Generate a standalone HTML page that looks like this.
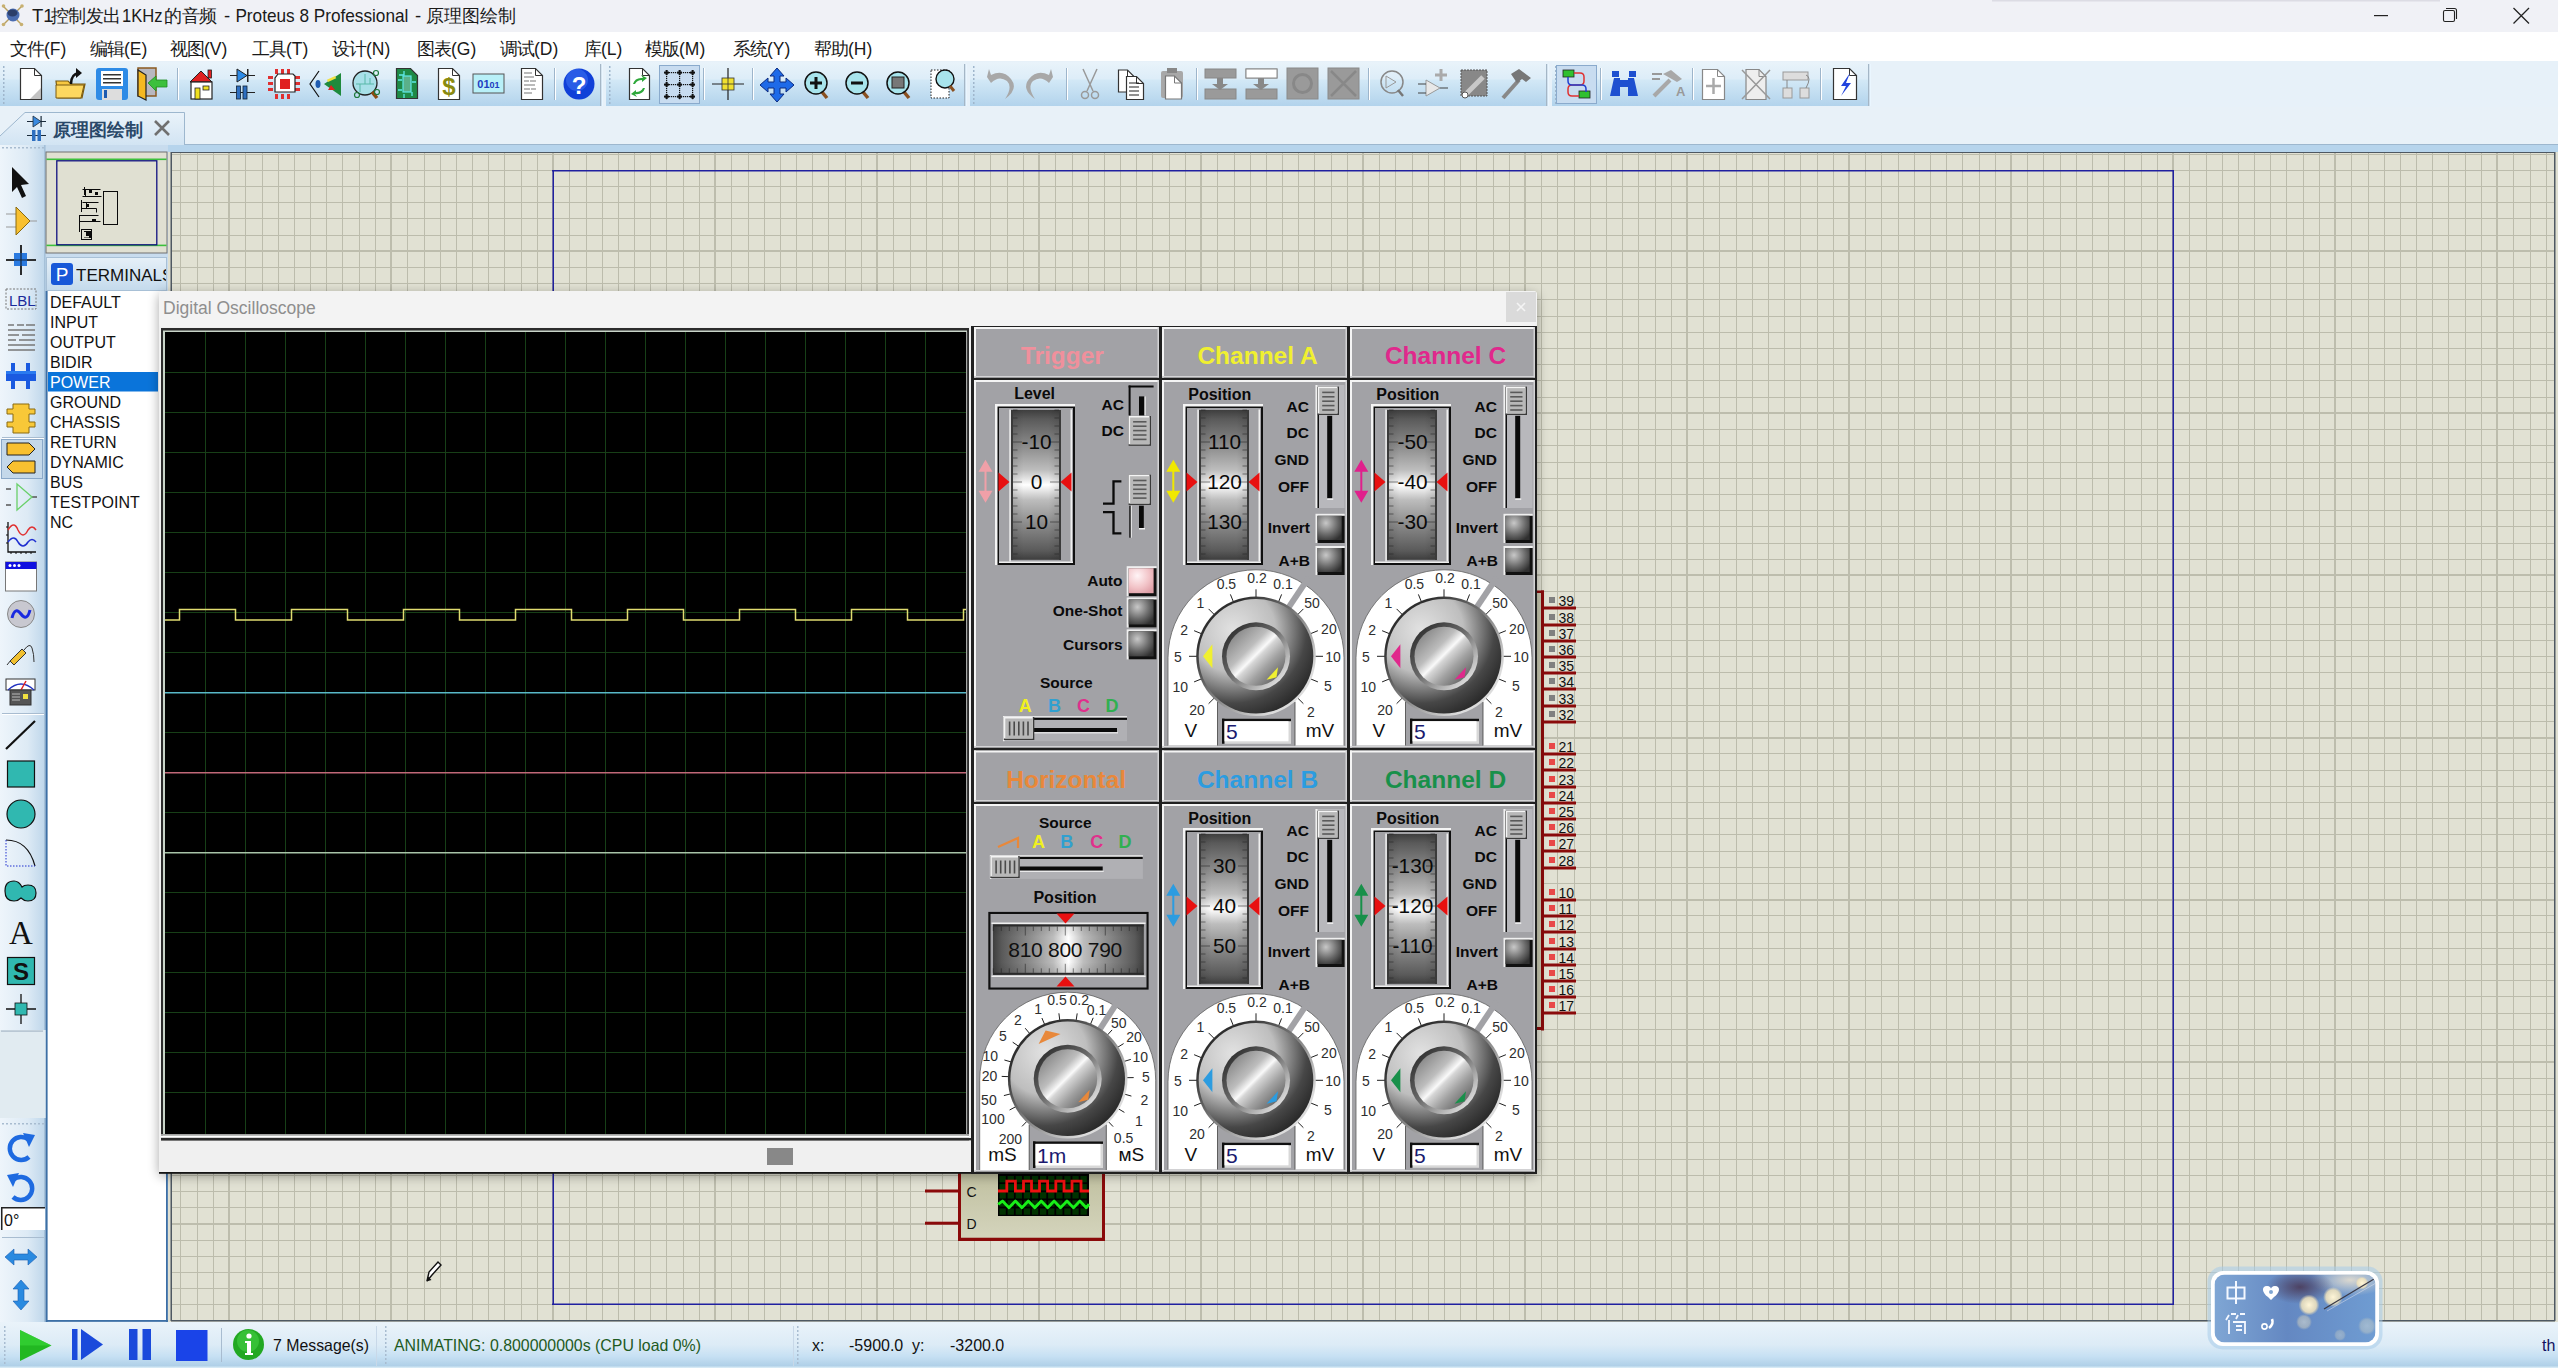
<!DOCTYPE html>
<html><head><meta charset="utf-8"><title>Proteus</title>
<style>html,body{margin:0;padding:0;overflow:hidden;background:#E0E0D2} svg{display:block} text{font-family:"Liberation Sans",sans-serif}</style></head>
<body><svg width="2558" height="1368" viewBox="0 0 2558 1368" shape-rendering="auto"><defs>
<linearGradient id="gTool" x1="0" y1="0" x2="0" y2="1"><stop offset="0" stop-color="#E9F3FA"/><stop offset="0.38" stop-color="#DDEDF8"/><stop offset="0.42" stop-color="#D2E8F6"/><stop offset="1" stop-color="#B2D3EC"/></linearGradient>
<linearGradient id="gStatus" x1="0" y1="0" x2="0" y2="1"><stop offset="0" stop-color="#EAF3FA"/><stop offset="0.5" stop-color="#DCEBF6"/><stop offset="0.75" stop-color="#C6E0F3"/><stop offset="0.95" stop-color="#B0D0E8"/><stop offset="1" stop-color="#E0F0F8"/></linearGradient>
<linearGradient id="gLeft" x1="0" y1="0" x2="1" y2="0"><stop offset="0" stop-color="#EEF5FB"/><stop offset="0.6" stop-color="#DDEAF5"/><stop offset="1" stop-color="#BCD5EA"/></linearGradient>
<linearGradient id="gTab" x1="0" y1="0" x2="0" y2="1"><stop offset="0" stop-color="#EAF3FA"/><stop offset="1" stop-color="#D2E4F3"/></linearGradient>
<linearGradient id="gHdr" x1="0" y1="0" x2="0" y2="1"><stop offset="0" stop-color="#E6F0F8"/><stop offset="1" stop-color="#C4DAEC"/></linearGradient>
<linearGradient id="gDrumV" x1="0" y1="0" x2="0" y2="1"><stop offset="0" stop-color="#3E3E3E"/><stop offset="0.06" stop-color="#5A5A5A"/><stop offset="0.25" stop-color="#8E8E8E"/><stop offset="0.4" stop-color="#BDBDBD"/><stop offset="0.5" stop-color="#FFFFFF"/><stop offset="0.6" stop-color="#BDBDBD"/><stop offset="0.75" stop-color="#8E8E8E"/><stop offset="0.94" stop-color="#5A5A5A"/><stop offset="1" stop-color="#3E3E3E"/></linearGradient>
<linearGradient id="gDrumH" x1="0" y1="0" x2="1" y2="0"><stop offset="0" stop-color="#3E3E3E"/><stop offset="0.06" stop-color="#5A5A5A"/><stop offset="0.25" stop-color="#8E8E8E"/><stop offset="0.4" stop-color="#BDBDBD"/><stop offset="0.5" stop-color="#FFFFFF"/><stop offset="0.6" stop-color="#BDBDBD"/><stop offset="0.75" stop-color="#8E8E8E"/><stop offset="0.94" stop-color="#5A5A5A"/><stop offset="1" stop-color="#3E3E3E"/></linearGradient>
<linearGradient id="gDrumSide" x1="0" y1="0" x2="1" y2="0"><stop offset="0" stop-color="#000" stop-opacity="0.12"/><stop offset="0.25" stop-color="#000" stop-opacity="0"/><stop offset="0.75" stop-color="#000" stop-opacity="0"/><stop offset="1" stop-color="#000" stop-opacity="0.12"/></linearGradient>
<linearGradient id="gDrumSideH" x1="0" y1="0" x2="0" y2="1"><stop offset="0" stop-color="#000" stop-opacity="0.12"/><stop offset="0.25" stop-color="#000" stop-opacity="0"/><stop offset="0.75" stop-color="#000" stop-opacity="0"/><stop offset="1" stop-color="#000" stop-opacity="0.12"/></linearGradient>
<radialGradient id="gBtn" cx="0.35" cy="0.3" r="0.8"><stop offset="0" stop-color="#C8C8C8"/><stop offset="0.6" stop-color="#6A6A6A"/><stop offset="1" stop-color="#303030"/></radialGradient>
<radialGradient id="gBtnP" cx="0.35" cy="0.3" r="0.8"><stop offset="0" stop-color="#FFF4F6"/><stop offset="0.6" stop-color="#F2C4C8"/><stop offset="1" stop-color="#E0A0A8"/></radialGradient>
<radialGradient id="gKnob" cx="0.3" cy="0.27" r="0.82"><stop offset="0" stop-color="#E2E2E2"/><stop offset="0.45" stop-color="#BEBEBE"/><stop offset="0.78" stop-color="#474747"/><stop offset="1" stop-color="#262626"/></radialGradient><linearGradient id="gRim" x1="0.2" y1="0.2" x2="0.8" y2="0.8"><stop offset="0" stop-color="#2E2E2E"/><stop offset="0.5" stop-color="#808080"/><stop offset="1" stop-color="#DCDCDC"/></linearGradient>
<linearGradient id="gRing" x1="0.15" y1="0.15" x2="0.85" y2="0.85"><stop offset="0" stop-color="#363636"/><stop offset="0.45" stop-color="#6A6A6A"/><stop offset="1" stop-color="#DADADA"/></linearGradient>
<linearGradient id="gInner" x1="0.15" y1="0.15" x2="0.85" y2="0.85"><stop offset="0" stop-color="#8E8E8E"/><stop offset="0.32" stop-color="#BDBDBD"/><stop offset="0.48" stop-color="#FAFAFA"/><stop offset="0.54" stop-color="#D6D6D6"/><stop offset="0.75" stop-color="#A0A0A0"/><stop offset="1" stop-color="#6E6E6E"/></linearGradient>
<linearGradient id="gInnerX" x1="0" y1="0" x2="1" y2="1"><stop offset="0" stop-color="#505050"/><stop offset="0.45" stop-color="#B0B0B0"/><stop offset="0.5" stop-color="#F0F0F0"/><stop offset="0.55" stop-color="#B8B8B8"/><stop offset="1" stop-color="#3A3A3A"/></linearGradient>
<filter id="shadow" x="-5%" y="-5%" width="110%" height="110%"><feGaussianBlur in="SourceAlpha" stdDeviation="6"/><feOffset dx="0" dy="3"/><feComponentTransfer><feFuncA type="linear" slope="0.35"/></feComponentTransfer><feMerge><feMergeNode/><feMergeNode in="SourceGraphic"/></feMerge></filter>
</defs><rect x="0" y="0" width="2558" height="1368" fill="#E0E0D2" /><rect x="171" y="152" width="2384" height="1169" fill="#E1E1D3" /><rect x="180" y="152" width="1" height="1169" fill="#BCBCAC"/><rect x="197" y="152" width="1" height="1169" fill="#BCBCAC"/><rect x="213" y="152" width="1" height="1169" fill="#BCBCAC"/><rect x="228" y="152" width="2" height="1169" fill="#BDBDAD"/><rect x="245" y="152" width="1" height="1169" fill="#BCBCAC"/><rect x="262" y="152" width="1" height="1169" fill="#BCBCAC"/><rect x="278" y="152" width="1" height="1169" fill="#BCBCAC"/><rect x="294" y="152" width="1" height="1169" fill="#BCBCAC"/><rect x="310" y="152" width="1" height="1169" fill="#BCBCAC"/><rect x="326" y="152" width="1" height="1169" fill="#BCBCAC"/><rect x="342" y="152" width="1" height="1169" fill="#BCBCAC"/><rect x="359" y="152" width="1" height="1169" fill="#BCBCAC"/><rect x="375" y="152" width="1" height="1169" fill="#BCBCAC"/><rect x="390" y="152" width="2" height="1169" fill="#BDBDAD"/><rect x="407" y="152" width="1" height="1169" fill="#BCBCAC"/><rect x="424" y="152" width="1" height="1169" fill="#BCBCAC"/><rect x="440" y="152" width="1" height="1169" fill="#BCBCAC"/><rect x="456" y="152" width="1" height="1169" fill="#BCBCAC"/><rect x="472" y="152" width="1" height="1169" fill="#BCBCAC"/><rect x="488" y="152" width="1" height="1169" fill="#BCBCAC"/><rect x="504" y="152" width="1" height="1169" fill="#BCBCAC"/><rect x="521" y="152" width="1" height="1169" fill="#BCBCAC"/><rect x="537" y="152" width="1" height="1169" fill="#BCBCAC"/><rect x="552" y="152" width="2" height="1169" fill="#BDBDAD"/><rect x="569" y="152" width="1" height="1169" fill="#BCBCAC"/><rect x="586" y="152" width="1" height="1169" fill="#BCBCAC"/><rect x="602" y="152" width="1" height="1169" fill="#BCBCAC"/><rect x="618" y="152" width="1" height="1169" fill="#BCBCAC"/><rect x="634" y="152" width="1" height="1169" fill="#BCBCAC"/><rect x="650" y="152" width="1" height="1169" fill="#BCBCAC"/><rect x="666" y="152" width="1" height="1169" fill="#BCBCAC"/><rect x="683" y="152" width="1" height="1169" fill="#BCBCAC"/><rect x="699" y="152" width="1" height="1169" fill="#BCBCAC"/><rect x="714" y="152" width="2" height="1169" fill="#BDBDAD"/><rect x="731" y="152" width="1" height="1169" fill="#BCBCAC"/><rect x="748" y="152" width="1" height="1169" fill="#BCBCAC"/><rect x="764" y="152" width="1" height="1169" fill="#BCBCAC"/><rect x="780" y="152" width="1" height="1169" fill="#BCBCAC"/><rect x="796" y="152" width="1" height="1169" fill="#BCBCAC"/><rect x="812" y="152" width="1" height="1169" fill="#BCBCAC"/><rect x="828" y="152" width="1" height="1169" fill="#BCBCAC"/><rect x="845" y="152" width="1" height="1169" fill="#BCBCAC"/><rect x="861" y="152" width="1" height="1169" fill="#BCBCAC"/><rect x="876" y="152" width="2" height="1169" fill="#BDBDAD"/><rect x="893" y="152" width="1" height="1169" fill="#BCBCAC"/><rect x="910" y="152" width="1" height="1169" fill="#BCBCAC"/><rect x="926" y="152" width="1" height="1169" fill="#BCBCAC"/><rect x="942" y="152" width="1" height="1169" fill="#BCBCAC"/><rect x="958" y="152" width="1" height="1169" fill="#BCBCAC"/><rect x="974" y="152" width="1" height="1169" fill="#BCBCAC"/><rect x="990" y="152" width="1" height="1169" fill="#BCBCAC"/><rect x="1007" y="152" width="1" height="1169" fill="#BCBCAC"/><rect x="1023" y="152" width="1" height="1169" fill="#BCBCAC"/><rect x="1038" y="152" width="2" height="1169" fill="#BDBDAD"/><rect x="1055" y="152" width="1" height="1169" fill="#BCBCAC"/><rect x="1072" y="152" width="1" height="1169" fill="#BCBCAC"/><rect x="1088" y="152" width="1" height="1169" fill="#BCBCAC"/><rect x="1104" y="152" width="1" height="1169" fill="#BCBCAC"/><rect x="1120" y="152" width="1" height="1169" fill="#BCBCAC"/><rect x="1136" y="152" width="1" height="1169" fill="#BCBCAC"/><rect x="1152" y="152" width="1" height="1169" fill="#BCBCAC"/><rect x="1169" y="152" width="1" height="1169" fill="#BCBCAC"/><rect x="1185" y="152" width="1" height="1169" fill="#BCBCAC"/><rect x="1200" y="152" width="2" height="1169" fill="#BDBDAD"/><rect x="1217" y="152" width="1" height="1169" fill="#BCBCAC"/><rect x="1234" y="152" width="1" height="1169" fill="#BCBCAC"/><rect x="1250" y="152" width="1" height="1169" fill="#BCBCAC"/><rect x="1266" y="152" width="1" height="1169" fill="#BCBCAC"/><rect x="1282" y="152" width="1" height="1169" fill="#BCBCAC"/><rect x="1298" y="152" width="1" height="1169" fill="#BCBCAC"/><rect x="1314" y="152" width="1" height="1169" fill="#BCBCAC"/><rect x="1331" y="152" width="1" height="1169" fill="#BCBCAC"/><rect x="1347" y="152" width="1" height="1169" fill="#BCBCAC"/><rect x="1362" y="152" width="2" height="1169" fill="#BDBDAD"/><rect x="1379" y="152" width="1" height="1169" fill="#BCBCAC"/><rect x="1395" y="152" width="1" height="1169" fill="#BCBCAC"/><rect x="1412" y="152" width="1" height="1169" fill="#BCBCAC"/><rect x="1428" y="152" width="1" height="1169" fill="#BCBCAC"/><rect x="1444" y="152" width="1" height="1169" fill="#BCBCAC"/><rect x="1460" y="152" width="1" height="1169" fill="#BCBCAC"/><rect x="1476" y="152" width="1" height="1169" fill="#BCBCAC"/><rect x="1493" y="152" width="1" height="1169" fill="#BCBCAC"/><rect x="1509" y="152" width="1" height="1169" fill="#BCBCAC"/><rect x="1524" y="152" width="2" height="1169" fill="#BDBDAD"/><rect x="1541" y="152" width="1" height="1169" fill="#BCBCAC"/><rect x="1557" y="152" width="1" height="1169" fill="#BCBCAC"/><rect x="1574" y="152" width="1" height="1169" fill="#BCBCAC"/><rect x="1590" y="152" width="1" height="1169" fill="#BCBCAC"/><rect x="1606" y="152" width="1" height="1169" fill="#BCBCAC"/><rect x="1622" y="152" width="1" height="1169" fill="#BCBCAC"/><rect x="1638" y="152" width="1" height="1169" fill="#BCBCAC"/><rect x="1655" y="152" width="1" height="1169" fill="#BCBCAC"/><rect x="1671" y="152" width="1" height="1169" fill="#BCBCAC"/><rect x="1686" y="152" width="2" height="1169" fill="#BDBDAD"/><rect x="1703" y="152" width="1" height="1169" fill="#BCBCAC"/><rect x="1719" y="152" width="1" height="1169" fill="#BCBCAC"/><rect x="1736" y="152" width="1" height="1169" fill="#BCBCAC"/><rect x="1752" y="152" width="1" height="1169" fill="#BCBCAC"/><rect x="1768" y="152" width="1" height="1169" fill="#BCBCAC"/><rect x="1784" y="152" width="1" height="1169" fill="#BCBCAC"/><rect x="1800" y="152" width="1" height="1169" fill="#BCBCAC"/><rect x="1817" y="152" width="1" height="1169" fill="#BCBCAC"/><rect x="1833" y="152" width="1" height="1169" fill="#BCBCAC"/><rect x="1848" y="152" width="2" height="1169" fill="#BDBDAD"/><rect x="1865" y="152" width="1" height="1169" fill="#BCBCAC"/><rect x="1881" y="152" width="1" height="1169" fill="#BCBCAC"/><rect x="1898" y="152" width="1" height="1169" fill="#BCBCAC"/><rect x="1914" y="152" width="1" height="1169" fill="#BCBCAC"/><rect x="1930" y="152" width="1" height="1169" fill="#BCBCAC"/><rect x="1946" y="152" width="1" height="1169" fill="#BCBCAC"/><rect x="1962" y="152" width="1" height="1169" fill="#BCBCAC"/><rect x="1979" y="152" width="1" height="1169" fill="#BCBCAC"/><rect x="1995" y="152" width="1" height="1169" fill="#BCBCAC"/><rect x="2010" y="152" width="2" height="1169" fill="#BDBDAD"/><rect x="2027" y="152" width="1" height="1169" fill="#BCBCAC"/><rect x="2043" y="152" width="1" height="1169" fill="#BCBCAC"/><rect x="2060" y="152" width="1" height="1169" fill="#BCBCAC"/><rect x="2076" y="152" width="1" height="1169" fill="#BCBCAC"/><rect x="2092" y="152" width="1" height="1169" fill="#BCBCAC"/><rect x="2108" y="152" width="1" height="1169" fill="#BCBCAC"/><rect x="2124" y="152" width="1" height="1169" fill="#BCBCAC"/><rect x="2141" y="152" width="1" height="1169" fill="#BCBCAC"/><rect x="2157" y="152" width="1" height="1169" fill="#BCBCAC"/><rect x="2172" y="152" width="2" height="1169" fill="#BDBDAD"/><rect x="2189" y="152" width="1" height="1169" fill="#BCBCAC"/><rect x="2206" y="152" width="1" height="1169" fill="#BCBCAC"/><rect x="2222" y="152" width="1" height="1169" fill="#BCBCAC"/><rect x="2238" y="152" width="1" height="1169" fill="#BCBCAC"/><rect x="2254" y="152" width="1" height="1169" fill="#BCBCAC"/><rect x="2270" y="152" width="1" height="1169" fill="#BCBCAC"/><rect x="2286" y="152" width="1" height="1169" fill="#BCBCAC"/><rect x="2303" y="152" width="1" height="1169" fill="#BCBCAC"/><rect x="2319" y="152" width="1" height="1169" fill="#BCBCAC"/><rect x="2334" y="152" width="2" height="1169" fill="#BDBDAD"/><rect x="2351" y="152" width="1" height="1169" fill="#BCBCAC"/><rect x="2368" y="152" width="1" height="1169" fill="#BCBCAC"/><rect x="2384" y="152" width="1" height="1169" fill="#BCBCAC"/><rect x="2400" y="152" width="1" height="1169" fill="#BCBCAC"/><rect x="2416" y="152" width="1" height="1169" fill="#BCBCAC"/><rect x="2432" y="152" width="1" height="1169" fill="#BCBCAC"/><rect x="2448" y="152" width="1" height="1169" fill="#BCBCAC"/><rect x="2465" y="152" width="1" height="1169" fill="#BCBCAC"/><rect x="2481" y="152" width="1" height="1169" fill="#BCBCAC"/><rect x="2496" y="152" width="2" height="1169" fill="#BDBDAD"/><rect x="2513" y="152" width="1" height="1169" fill="#BCBCAC"/><rect x="2530" y="152" width="1" height="1169" fill="#BCBCAC"/><rect x="2546" y="152" width="1" height="1169" fill="#BCBCAC"/><rect x="171" y="154" width="2384" height="1" fill="#BCBCAC"/><rect x="171" y="170" width="2384" height="1" fill="#BCBCAC"/><rect x="171" y="186" width="2384" height="1" fill="#BCBCAC"/><rect x="171" y="202" width="2384" height="1" fill="#BCBCAC"/><rect x="171" y="218" width="2384" height="1" fill="#BCBCAC"/><rect x="171" y="235" width="2384" height="1" fill="#BCBCAC"/><rect x="171" y="250" width="2384" height="2" fill="#BDBDAD"/><rect x="171" y="267" width="2384" height="1" fill="#BCBCAC"/><rect x="171" y="283" width="2384" height="1" fill="#BCBCAC"/><rect x="171" y="299" width="2384" height="1" fill="#BCBCAC"/><rect x="171" y="316" width="2384" height="1" fill="#BCBCAC"/><rect x="171" y="332" width="2384" height="1" fill="#BCBCAC"/><rect x="171" y="348" width="2384" height="1" fill="#BCBCAC"/><rect x="171" y="364" width="2384" height="1" fill="#BCBCAC"/><rect x="171" y="380" width="2384" height="1" fill="#BCBCAC"/><rect x="171" y="397" width="2384" height="1" fill="#BCBCAC"/><rect x="171" y="412" width="2384" height="2" fill="#BDBDAD"/><rect x="171" y="429" width="2384" height="1" fill="#BCBCAC"/><rect x="171" y="445" width="2384" height="1" fill="#BCBCAC"/><rect x="171" y="462" width="2384" height="1" fill="#BCBCAC"/><rect x="171" y="478" width="2384" height="1" fill="#BCBCAC"/><rect x="171" y="494" width="2384" height="1" fill="#BCBCAC"/><rect x="171" y="510" width="2384" height="1" fill="#BCBCAC"/><rect x="171" y="526" width="2384" height="1" fill="#BCBCAC"/><rect x="171" y="543" width="2384" height="1" fill="#BCBCAC"/><rect x="171" y="559" width="2384" height="1" fill="#BCBCAC"/><rect x="171" y="574" width="2384" height="2" fill="#BDBDAD"/><rect x="171" y="591" width="2384" height="1" fill="#BCBCAC"/><rect x="171" y="607" width="2384" height="1" fill="#BCBCAC"/><rect x="171" y="624" width="2384" height="1" fill="#BCBCAC"/><rect x="171" y="640" width="2384" height="1" fill="#BCBCAC"/><rect x="171" y="656" width="2384" height="1" fill="#BCBCAC"/><rect x="171" y="672" width="2384" height="1" fill="#BCBCAC"/><rect x="171" y="688" width="2384" height="1" fill="#BCBCAC"/><rect x="171" y="705" width="2384" height="1" fill="#BCBCAC"/><rect x="171" y="721" width="2384" height="1" fill="#BCBCAC"/><rect x="171" y="737" width="2384" height="2" fill="#BDBDAD"/><rect x="171" y="753" width="2384" height="1" fill="#BCBCAC"/><rect x="171" y="770" width="2384" height="1" fill="#BCBCAC"/><rect x="171" y="786" width="2384" height="1" fill="#BCBCAC"/><rect x="171" y="802" width="2384" height="1" fill="#BCBCAC"/><rect x="171" y="818" width="2384" height="1" fill="#BCBCAC"/><rect x="171" y="834" width="2384" height="1" fill="#BCBCAC"/><rect x="171" y="851" width="2384" height="1" fill="#BCBCAC"/><rect x="171" y="867" width="2384" height="1" fill="#BCBCAC"/><rect x="171" y="883" width="2384" height="1" fill="#BCBCAC"/><rect x="171" y="899" width="2384" height="2" fill="#BDBDAD"/><rect x="171" y="915" width="2384" height="1" fill="#BCBCAC"/><rect x="171" y="932" width="2384" height="1" fill="#BCBCAC"/><rect x="171" y="948" width="2384" height="1" fill="#BCBCAC"/><rect x="171" y="964" width="2384" height="1" fill="#BCBCAC"/><rect x="171" y="980" width="2384" height="1" fill="#BCBCAC"/><rect x="171" y="996" width="2384" height="1" fill="#BCBCAC"/><rect x="171" y="1013" width="2384" height="1" fill="#BCBCAC"/><rect x="171" y="1029" width="2384" height="1" fill="#BCBCAC"/><rect x="171" y="1045" width="2384" height="1" fill="#BCBCAC"/><rect x="171" y="1061" width="2384" height="2" fill="#BDBDAD"/><rect x="171" y="1078" width="2384" height="1" fill="#BCBCAC"/><rect x="171" y="1094" width="2384" height="1" fill="#BCBCAC"/><rect x="171" y="1110" width="2384" height="1" fill="#BCBCAC"/><rect x="171" y="1126" width="2384" height="1" fill="#BCBCAC"/><rect x="171" y="1142" width="2384" height="1" fill="#BCBCAC"/><rect x="171" y="1159" width="2384" height="1" fill="#BCBCAC"/><rect x="171" y="1175" width="2384" height="1" fill="#BCBCAC"/><rect x="171" y="1191" width="2384" height="1" fill="#BCBCAC"/><rect x="171" y="1207" width="2384" height="1" fill="#BCBCAC"/><rect x="171" y="1223" width="2384" height="2" fill="#BDBDAD"/><rect x="171" y="1240" width="2384" height="1" fill="#BCBCAC"/><rect x="171" y="1256" width="2384" height="1" fill="#BCBCAC"/><rect x="171" y="1272" width="2384" height="1" fill="#BCBCAC"/><rect x="171" y="1288" width="2384" height="1" fill="#BCBCAC"/><rect x="171" y="1304" width="2384" height="1" fill="#BCBCAC"/><rect x="171" y="151.5" width="2384" height="1.5" fill="#4E5862" /><rect x="170.5" y="152" width="1.5" height="1169" fill="#4E5862" /><rect x="2554" y="152" width="1.5" height="1169" fill="#4E5862" /><rect x="171" y="1320" width="2384" height="1.5" fill="#4E5862" /><rect x="552" y="170" width="1622" height="1.5" fill="#2020A0" /><rect x="552" y="1303.5" width="1622" height="1.5" fill="#2020A0" /><rect x="552.5" y="170" width="1.5" height="1135" fill="#2020A0" /><rect x="2172.5" y="170" width="1.5" height="1135" fill="#2020A0" /><rect x="0" y="0" width="2558" height="32" fill="#F0F1F6" /><rect x="1992" y="0" width="448" height="1.5" fill="#DCDCE4" /><g><line x1="3" y1="6" x2="22" y2="25" stroke="#B8A060" stroke-width="1.5"/><line x1="22" y1="6" x2="3" y2="25" stroke="#B8A060" stroke-width="1.5"/><circle cx="13" cy="15" r="6.5" fill="#4A6CB0"/><ellipse cx="12.5" cy="13" rx="5" ry="3.5" fill="#2B3E6A"/><circle cx="3.5" cy="6" r="1.8" fill="#C8B070"/><circle cx="22" cy="6" r="1.8" fill="#C8B070"/><circle cx="3.5" cy="24.5" r="1.8" fill="#C8B070"/><circle cx="21.5" cy="24.5" r="1.8" fill="#C8B070"/></g><text x="32" y="22" font-family="Liberation Sans" font-size="18.5" fill="#1A1A1A" text-anchor="start" font-weight="normal" >T1</text><text x="50.7" y="22" font-family="Liberation Sans" font-size="18" fill="#1A1A1A" text-anchor="start" font-weight="normal" >控</text><text x="68.1" y="22" font-family="Liberation Sans" font-size="18" fill="#1A1A1A" text-anchor="start" font-weight="normal" >制</text><text x="85.5" y="22" font-family="Liberation Sans" font-size="18" fill="#1A1A1A" text-anchor="start" font-weight="normal" >发</text><text x="102.9" y="22" font-family="Liberation Sans" font-size="18" fill="#1A1A1A" text-anchor="start" font-weight="normal" >出</text><text x="122" y="22" font-family="Liberation Sans" font-size="18.5" fill="#1A1A1A" text-anchor="start" font-weight="normal" textLength="40.5" lengthAdjust="spacingAndGlyphs">1KHz</text><text x="163.6" y="22" font-family="Liberation Sans" font-size="18" fill="#1A1A1A" text-anchor="start" font-weight="normal" >的</text><text x="181.5" y="22" font-family="Liberation Sans" font-size="18" fill="#1A1A1A" text-anchor="start" font-weight="normal" >音</text><text x="199.39999999999998" y="22" font-family="Liberation Sans" font-size="18" fill="#1A1A1A" text-anchor="start" font-weight="normal" >频</text><text x="224" y="22" font-family="Liberation Sans" font-size="18.5" fill="#1A1A1A" text-anchor="start" font-weight="normal" >-</text><text x="235.4" y="22" font-family="Liberation Sans" font-size="18.5" fill="#1A1A1A" text-anchor="start" font-weight="normal" textLength="173" lengthAdjust="spacingAndGlyphs">Proteus 8 Professional</text><text x="415" y="22" font-family="Liberation Sans" font-size="18.5" fill="#1A1A1A" text-anchor="start" font-weight="normal" >-</text><text x="426.4" y="22" font-family="Liberation Sans" font-size="18" fill="#1A1A1A" text-anchor="start" font-weight="normal" >原</text><text x="444.29999999999995" y="22" font-family="Liberation Sans" font-size="18" fill="#1A1A1A" text-anchor="start" font-weight="normal" >理</text><text x="462.2" y="22" font-family="Liberation Sans" font-size="18" fill="#1A1A1A" text-anchor="start" font-weight="normal" >图</text><text x="480.09999999999997" y="22" font-family="Liberation Sans" font-size="18" fill="#1A1A1A" text-anchor="start" font-weight="normal" >绘</text><text x="498.0" y="22" font-family="Liberation Sans" font-size="18" fill="#1A1A1A" text-anchor="start" font-weight="normal" >制</text><rect x="2374" y="15" width="14" height="1.2" fill="#222" /><rect x="2443.5" y="10.5" width="11" height="11" rx="1.5" fill="none" stroke="#222" stroke-width="1.1"/><path d="M2446 8.5 h8.5 a2 2 0 0 1 2 2 v8.5" fill="none" stroke="#222" stroke-width="1.1"/><path d="M2513.5 8 L2529 23.5 M2529 8 L2513.5 23.5" stroke="#222" stroke-width="1.3"/><rect x="0" y="32" width="2558" height="29" fill="#FFFFFF" /><text x="10" y="54.5" font-family="Liberation Sans" font-size="17.5" fill="#1A1A1A" text-anchor="start" font-weight="normal" >文</text><text x="27" y="54.5" font-family="Liberation Sans" font-size="17.5" fill="#1A1A1A" text-anchor="start" font-weight="normal" >件</text><text x="44" y="54.5" font-family="Liberation Sans" font-size="17.5" fill="#1A1A1A" text-anchor="start" font-weight="normal" >(F)</text><text x="90" y="54.5" font-family="Liberation Sans" font-size="17.5" fill="#1A1A1A" text-anchor="start" font-weight="normal" >编</text><text x="107" y="54.5" font-family="Liberation Sans" font-size="17.5" fill="#1A1A1A" text-anchor="start" font-weight="normal" >辑</text><text x="124" y="54.5" font-family="Liberation Sans" font-size="17.5" fill="#1A1A1A" text-anchor="start" font-weight="normal" >(E)</text><text x="170" y="54.5" font-family="Liberation Sans" font-size="17.5" fill="#1A1A1A" text-anchor="start" font-weight="normal" >视</text><text x="187" y="54.5" font-family="Liberation Sans" font-size="17.5" fill="#1A1A1A" text-anchor="start" font-weight="normal" >图</text><text x="204" y="54.5" font-family="Liberation Sans" font-size="17.5" fill="#1A1A1A" text-anchor="start" font-weight="normal" >(V)</text><text x="252" y="54.5" font-family="Liberation Sans" font-size="17.5" fill="#1A1A1A" text-anchor="start" font-weight="normal" >工</text><text x="269" y="54.5" font-family="Liberation Sans" font-size="17.5" fill="#1A1A1A" text-anchor="start" font-weight="normal" >具</text><text x="286" y="54.5" font-family="Liberation Sans" font-size="17.5" fill="#1A1A1A" text-anchor="start" font-weight="normal" >(T)</text><text x="332" y="54.5" font-family="Liberation Sans" font-size="17.5" fill="#1A1A1A" text-anchor="start" font-weight="normal" >设</text><text x="349" y="54.5" font-family="Liberation Sans" font-size="17.5" fill="#1A1A1A" text-anchor="start" font-weight="normal" >计</text><text x="366" y="54.5" font-family="Liberation Sans" font-size="17.5" fill="#1A1A1A" text-anchor="start" font-weight="normal" >(N)</text><text x="417" y="54.5" font-family="Liberation Sans" font-size="17.5" fill="#1A1A1A" text-anchor="start" font-weight="normal" >图</text><text x="434" y="54.5" font-family="Liberation Sans" font-size="17.5" fill="#1A1A1A" text-anchor="start" font-weight="normal" >表</text><text x="451" y="54.5" font-family="Liberation Sans" font-size="17.5" fill="#1A1A1A" text-anchor="start" font-weight="normal" >(G)</text><text x="500" y="54.5" font-family="Liberation Sans" font-size="17.5" fill="#1A1A1A" text-anchor="start" font-weight="normal" >调</text><text x="517" y="54.5" font-family="Liberation Sans" font-size="17.5" fill="#1A1A1A" text-anchor="start" font-weight="normal" >试</text><text x="534" y="54.5" font-family="Liberation Sans" font-size="17.5" fill="#1A1A1A" text-anchor="start" font-weight="normal" >(D)</text><text x="584" y="54.5" font-family="Liberation Sans" font-size="17.5" fill="#1A1A1A" text-anchor="start" font-weight="normal" >库</text><text x="601" y="54.5" font-family="Liberation Sans" font-size="17.5" fill="#1A1A1A" text-anchor="start" font-weight="normal" >(L)</text><text x="645" y="54.5" font-family="Liberation Sans" font-size="17.5" fill="#1A1A1A" text-anchor="start" font-weight="normal" >模</text><text x="662" y="54.5" font-family="Liberation Sans" font-size="17.5" fill="#1A1A1A" text-anchor="start" font-weight="normal" >版</text><text x="679" y="54.5" font-family="Liberation Sans" font-size="17.5" fill="#1A1A1A" text-anchor="start" font-weight="normal" >(M)</text><text x="733" y="54.5" font-family="Liberation Sans" font-size="17.5" fill="#1A1A1A" text-anchor="start" font-weight="normal" >系</text><text x="750" y="54.5" font-family="Liberation Sans" font-size="17.5" fill="#1A1A1A" text-anchor="start" font-weight="normal" >统</text><text x="767" y="54.5" font-family="Liberation Sans" font-size="17.5" fill="#1A1A1A" text-anchor="start" font-weight="normal" >(Y)</text><text x="814" y="54.5" font-family="Liberation Sans" font-size="17.5" fill="#1A1A1A" text-anchor="start" font-weight="normal" >帮</text><text x="831" y="54.5" font-family="Liberation Sans" font-size="17.5" fill="#1A1A1A" text-anchor="start" font-weight="normal" >助</text><text x="848" y="54.5" font-family="Liberation Sans" font-size="17.5" fill="#1A1A1A" text-anchor="start" font-weight="normal" >(H)</text><rect x="0" y="61" width="2558" height="46" fill="#E7F1F9" /><rect x="0" y="62" width="602" height="44" fill="url(#gTool)" /><rect x="3" y="66" width="1.5" height="2" fill="#9FB6CC" /><rect x="3" y="70" width="1.5" height="2" fill="#9FB6CC" /><rect x="3" y="74" width="1.5" height="2" fill="#9FB6CC" /><rect x="3" y="78" width="1.5" height="2" fill="#9FB6CC" /><rect x="3" y="82" width="1.5" height="2" fill="#9FB6CC" /><rect x="3" y="86" width="1.5" height="2" fill="#9FB6CC" /><rect x="3" y="90" width="1.5" height="2" fill="#9FB6CC" /><rect x="3" y="94" width="1.5" height="2" fill="#9FB6CC" /><rect x="3" y="98" width="1.5" height="2" fill="#9FB6CC" /><rect x="3" y="102" width="1.5" height="2" fill="#9FB6CC" /><rect x="600" y="64" width="1.5" height="42" fill="#A4B6C6" /><rect x="601.5" y="64" width="1.5" height="42" fill="#EAF6FF" /><rect x="606" y="62" width="360" height="44" fill="url(#gTool)" /><rect x="609" y="66" width="1.5" height="2" fill="#9FB6CC" /><rect x="609" y="70" width="1.5" height="2" fill="#9FB6CC" /><rect x="609" y="74" width="1.5" height="2" fill="#9FB6CC" /><rect x="609" y="78" width="1.5" height="2" fill="#9FB6CC" /><rect x="609" y="82" width="1.5" height="2" fill="#9FB6CC" /><rect x="609" y="86" width="1.5" height="2" fill="#9FB6CC" /><rect x="609" y="90" width="1.5" height="2" fill="#9FB6CC" /><rect x="609" y="94" width="1.5" height="2" fill="#9FB6CC" /><rect x="609" y="98" width="1.5" height="2" fill="#9FB6CC" /><rect x="609" y="102" width="1.5" height="2" fill="#9FB6CC" /><rect x="964" y="64" width="1.5" height="42" fill="#A4B6C6" /><rect x="965.5" y="64" width="1.5" height="42" fill="#EAF6FF" /><rect x="970" y="62" width="578" height="44" fill="url(#gTool)" /><rect x="973" y="66" width="1.5" height="2" fill="#9FB6CC" /><rect x="973" y="70" width="1.5" height="2" fill="#9FB6CC" /><rect x="973" y="74" width="1.5" height="2" fill="#9FB6CC" /><rect x="973" y="78" width="1.5" height="2" fill="#9FB6CC" /><rect x="973" y="82" width="1.5" height="2" fill="#9FB6CC" /><rect x="973" y="86" width="1.5" height="2" fill="#9FB6CC" /><rect x="973" y="90" width="1.5" height="2" fill="#9FB6CC" /><rect x="973" y="94" width="1.5" height="2" fill="#9FB6CC" /><rect x="973" y="98" width="1.5" height="2" fill="#9FB6CC" /><rect x="973" y="102" width="1.5" height="2" fill="#9FB6CC" /><rect x="1546" y="64" width="1.5" height="42" fill="#A4B6C6" /><rect x="1547.5" y="64" width="1.5" height="42" fill="#EAF6FF" /><rect x="1552" y="62" width="318" height="44" fill="url(#gTool)" /><rect x="1555" y="66" width="1.5" height="2" fill="#9FB6CC" /><rect x="1555" y="70" width="1.5" height="2" fill="#9FB6CC" /><rect x="1555" y="74" width="1.5" height="2" fill="#9FB6CC" /><rect x="1555" y="78" width="1.5" height="2" fill="#9FB6CC" /><rect x="1555" y="82" width="1.5" height="2" fill="#9FB6CC" /><rect x="1555" y="86" width="1.5" height="2" fill="#9FB6CC" /><rect x="1555" y="90" width="1.5" height="2" fill="#9FB6CC" /><rect x="1555" y="94" width="1.5" height="2" fill="#9FB6CC" /><rect x="1555" y="98" width="1.5" height="2" fill="#9FB6CC" /><rect x="1555" y="102" width="1.5" height="2" fill="#9FB6CC" /><rect x="1868" y="64" width="1.5" height="42" fill="#A4B6C6" /><rect x="1869.5" y="64" width="1.5" height="42" fill="#EAF6FF" /><rect x="177" y="68" width="1" height="32" fill="#9DB5CB" /><rect x="178" y="68" width="1" height="32" fill="#FFFFFF" /><rect x="554" y="68" width="1" height="32" fill="#9DB5CB" /><rect x="555" y="68" width="1" height="32" fill="#FFFFFF" /><rect x="703" y="68" width="1" height="32" fill="#9DB5CB" /><rect x="704" y="68" width="1" height="32" fill="#FFFFFF" /><rect x="752" y="68" width="1" height="32" fill="#9DB5CB" /><rect x="753" y="68" width="1" height="32" fill="#FFFFFF" /><rect x="1066" y="68" width="1" height="32" fill="#9DB5CB" /><rect x="1067" y="68" width="1" height="32" fill="#FFFFFF" /><rect x="1196" y="68" width="1" height="32" fill="#9DB5CB" /><rect x="1197" y="68" width="1" height="32" fill="#FFFFFF" /><rect x="1368" y="68" width="1" height="32" fill="#9DB5CB" /><rect x="1369" y="68" width="1" height="32" fill="#FFFFFF" /><rect x="1600" y="68" width="1" height="32" fill="#9DB5CB" /><rect x="1601" y="68" width="1" height="32" fill="#FFFFFF" /><rect x="1692" y="68" width="1" height="32" fill="#9DB5CB" /><rect x="1693" y="68" width="1" height="32" fill="#FFFFFF" /><rect x="1820" y="68" width="1" height="32" fill="#9DB5CB" /><rect x="1821" y="68" width="1" height="32" fill="#FFFFFF" /><path d="M20.5 68.5 h14 l7 7 v24 h-21 z" fill="#FFFFFF" stroke="#333" stroke-width="1.2" /><path d="M34.5 68.5 v7 h7" fill="none" stroke="#333" stroke-width="1" /><path d="M30 99 L41 88 V99 Z" fill="#888" opacity="0.5"/><path d="M56 81 h12 l3 3 h14 l-3 14 h-24 z" fill="#F8C840" stroke="#7A5A10" stroke-width="1.2"/><path d="M56 85 h28 l-3 13 h-25z" fill="#FDD860" stroke="#7A5A10" stroke-width="1"/><path d="M71 84 q0 -10 8 -11" fill="none" stroke="#111" stroke-width="2.5"/><path d="M76 68 l6 5 l-6 5z" fill="#111"/><rect x="96" y="68" width="32" height="32" rx="3" fill="#2E8BE6"/><rect x="101" y="71" width="22" height="15" fill="#FFF"/><rect x="103" y="74" width="18" height="1.5" fill="#333"/><rect x="103" y="78" width="18" height="1.5" fill="#333"/><rect x="103" y="82" width="18" height="1.5" fill="#333"/><rect x="102" y="89" width="20" height="11" fill="#DDD"/><rect x="104" y="90" width="3" height="8" fill="#1E5BB0"/><rect x="138" y="68" width="18" height="28" fill="#B8B8C0" stroke="#8A5A20" stroke-width="1.5"/><path d="M138 70 l8 5 v25 l-8 -4z" fill="#F5B820" stroke="#222" stroke-width="1.2"/><path d="M148 83 l8 -7 v4 h11 v7 h-11 v4z" fill="#3CC03C" stroke="#1E8A1E" stroke-width="0.8"/><path d="M190 82 l11 -11 l11 11z" fill="#E02020" stroke="#222" stroke-width="1"/><rect x="208" y="70" width="3.5" height="8" fill="#E02020" stroke="#222" stroke-width="0.8"/><rect x="191" y="82" width="21" height="17" fill="#FFF" stroke="#222" stroke-width="1.2"/><rect x="195" y="88" width="5" height="11" fill="#F0E020" stroke="#222" stroke-width="0.8"/><rect x="203" y="86" width="6" height="4" fill="#F0E020" stroke="#222" stroke-width="0.8"/><path d="M230 75.5 h25 M230 92.5 h25" stroke="#222" stroke-width="1.2"/><path d="M237 69 l10 6.5 l-10 6.5z" fill="#2E8BE6" stroke="#222" stroke-width="1"/><rect x="247" y="69" width="1.5" height="13" fill="#222"/><rect x="236.5" y="86" width="4" height="13" fill="#2E6FC0" stroke="#123" stroke-width="0.8"/><rect x="243" y="86" width="4" height="13" fill="#2E6FC0" stroke="#123" stroke-width="0.8"/><g fill="#E03030"><rect x="275" y="69" width="3" height="5"/><rect x="275" y="94" width="3" height="5"/><rect x="268" y="76" width="5" height="3"/><rect x="295" y="76" width="5" height="3"/><rect x="281" y="69" width="3" height="5"/><rect x="281" y="94" width="3" height="5"/><rect x="268" y="82" width="5" height="3"/><rect x="295" y="82" width="5" height="3"/><rect x="287" y="69" width="3" height="5"/><rect x="287" y="94" width="3" height="5"/><rect x="268" y="88" width="5" height="3"/><rect x="295" y="88" width="5" height="3"/></g><path d="M278 74 h15 l2 2 v16 h-20 v-14z" fill="#FFF" stroke="#222" stroke-width="1.2"/><rect x="280" y="79" width="10" height="10" fill="#E02020"/><path d="M319 71 L310 84 L319 97" fill="none" stroke="#111" stroke-width="1.2"/><ellipse cx="318" cy="84" rx="2.5" ry="4" fill="#1E5BB0"/><path d="M324 84 L341 73 V96 Z" fill="#1E8A3C"/><rect x="327" y="78" width="9" height="2.5" fill="#F0E040" transform="rotate(-25 331 79)"/><path d="M331 85 l4 5 h-7z" fill="#E02020"/><circle cx="365" cy="83" r="12" fill="#A8E0E8" stroke="#222" stroke-width="1.3"/><path d="M356 84 h18 M365 74 v10 M360 84 v8 M370 84 v-6" stroke="#58B8A8" stroke-width="1"/><path d="M372 92 l5 6" stroke="#8A4A10" stroke-width="3.5"/><circle cx="376" cy="73" r="2.5" fill="none" stroke="#1E7A3C" stroke-width="1.2"/><circle cx="357" cy="95" r="2.5" fill="none" stroke="#1E7A3C" stroke-width="1.2"/><circle cx="377" cy="92" r="2.5" fill="none" stroke="#1E7A3C" stroke-width="1.2"/><path d="M396.5 68.5 h14 l7 7 v23 h-21z" fill="#1E8A46" stroke="#333" stroke-width="1.2"/><path d="M399 75 h5 v-4 M402 80 h-4 M402 90 h-4 M404 94 v4 M412 82 h4 M412 92 v4" stroke="#5FE8E8" stroke-width="1.3" fill="none"/><rect x="403" y="76" width="8" height="16" fill="#5AB08A" stroke="#5FE8E8" stroke-width="1.2"/><path d="M438.5 68.5 h14 l7 7 v24 h-21 z" fill="#FFFFFF" stroke="#333" stroke-width="1.2" /><path d="M452.5 68.5 v7 h7" fill="none" stroke="#333" stroke-width="1" /><text x="449" y="95" font-family="Liberation Sans" font-size="24" fill="#8A8A10" text-anchor="middle" font-weight="bold" >$</text><rect x="473" y="74" width="31" height="19" fill="#B8F0F8" stroke="#555" stroke-width="1"/><text x="488.5" y="88" font-family="Liberation Sans" font-size="11" fill="#1E3CC0" text-anchor="middle" font-weight="bold" >01<tspan font-size="9">01</tspan></text><path d="M521.5 68.5 h14 l7 7 v24 h-21 z" fill="#FFFFFF" stroke="#333" stroke-width="1.2" /><path d="M535.5 68.5 v7 h7" fill="none" stroke="#333" stroke-width="1" /><path d="M524 73 h8 M524 77 h10 M524 81 h5 M530 81 h6 M524 85 h11 M524 89 h6 M531 89 h5 M524 93 h8" stroke="#777" stroke-width="1.2"/><circle cx="579" cy="84" r="15.5" fill="#1040D8"/><circle cx="577" cy="80" r="11" fill="#3A70F0" opacity="0.6"/><text x="579" y="93.5" font-family="Liberation Sans" font-size="24" fill="#FFF" text-anchor="middle" font-weight="bold" >?</text><path d="M629.5 68.5 h13 l7 7 v24 h-20 z" fill="#FFFFFF" stroke="#333" stroke-width="1.2" /><path d="M642.5 68.5 v7 h7" fill="none" stroke="#333" stroke-width="1" /><path d="M633 84 q2 -7 10 -6 l-2 -3 l6 3 l-5 4 v-2 q-5 0 -7 4z M645 88 q-2 7 -10 6 l2 3 l-6 -3 l5 -4 v2 q5 0 7 -4z" fill="#2EA83A"/><rect x="659.5" y="65.5" width="40" height="38" fill="#C8DCF0" stroke="#8AAACC" stroke-width="1"/><g fill="#111"><rect x="665" y="72" width="1.2" height="1.2"/><rect x="667" y="72" width="1.2" height="1.2"/><rect x="669" y="72" width="1.2" height="1.2"/><rect x="671" y="72" width="1.2" height="1.2"/><rect x="673" y="72" width="1.2" height="1.2"/><rect x="675" y="72" width="1.2" height="1.2"/><rect x="677" y="72" width="1.2" height="1.2"/><rect x="679" y="72" width="1.2" height="1.2"/><rect x="681" y="72" width="1.2" height="1.2"/><rect x="683" y="72" width="1.2" height="1.2"/><rect x="685" y="72" width="1.2" height="1.2"/><rect x="687" y="72" width="1.2" height="1.2"/><rect x="689" y="72" width="1.2" height="1.2"/><rect x="691" y="72" width="1.2" height="1.2"/><rect x="693" y="72" width="1.2" height="1.2"/><rect x="665" y="84" width="1.2" height="1.2"/><rect x="667" y="84" width="1.2" height="1.2"/><rect x="669" y="84" width="1.2" height="1.2"/><rect x="671" y="84" width="1.2" height="1.2"/><rect x="673" y="84" width="1.2" height="1.2"/><rect x="675" y="84" width="1.2" height="1.2"/><rect x="677" y="84" width="1.2" height="1.2"/><rect x="679" y="84" width="1.2" height="1.2"/><rect x="681" y="84" width="1.2" height="1.2"/><rect x="683" y="84" width="1.2" height="1.2"/><rect x="685" y="84" width="1.2" height="1.2"/><rect x="687" y="84" width="1.2" height="1.2"/><rect x="689" y="84" width="1.2" height="1.2"/><rect x="691" y="84" width="1.2" height="1.2"/><rect x="693" y="84" width="1.2" height="1.2"/><rect x="665" y="96" width="1.2" height="1.2"/><rect x="667" y="96" width="1.2" height="1.2"/><rect x="669" y="96" width="1.2" height="1.2"/><rect x="671" y="96" width="1.2" height="1.2"/><rect x="673" y="96" width="1.2" height="1.2"/><rect x="675" y="96" width="1.2" height="1.2"/><rect x="677" y="96" width="1.2" height="1.2"/><rect x="679" y="96" width="1.2" height="1.2"/><rect x="681" y="96" width="1.2" height="1.2"/><rect x="683" y="96" width="1.2" height="1.2"/><rect x="685" y="96" width="1.2" height="1.2"/><rect x="687" y="96" width="1.2" height="1.2"/><rect x="689" y="96" width="1.2" height="1.2"/><rect x="691" y="96" width="1.2" height="1.2"/><rect x="693" y="96" width="1.2" height="1.2"/><rect x="666" y="70" width="1.2" height="1.2"/><rect x="666" y="72" width="1.2" height="1.2"/><rect x="666" y="74" width="1.2" height="1.2"/><rect x="666" y="76" width="1.2" height="1.2"/><rect x="666" y="78" width="1.2" height="1.2"/><rect x="666" y="80" width="1.2" height="1.2"/><rect x="666" y="82" width="1.2" height="1.2"/><rect x="666" y="84" width="1.2" height="1.2"/><rect x="666" y="86" width="1.2" height="1.2"/><rect x="666" y="88" width="1.2" height="1.2"/><rect x="666" y="90" width="1.2" height="1.2"/><rect x="666" y="92" width="1.2" height="1.2"/><rect x="666" y="94" width="1.2" height="1.2"/><rect x="666" y="96" width="1.2" height="1.2"/><rect x="666" y="98" width="1.2" height="1.2"/><rect x="679" y="70" width="1.2" height="1.2"/><rect x="679" y="72" width="1.2" height="1.2"/><rect x="679" y="74" width="1.2" height="1.2"/><rect x="679" y="76" width="1.2" height="1.2"/><rect x="679" y="78" width="1.2" height="1.2"/><rect x="679" y="80" width="1.2" height="1.2"/><rect x="679" y="82" width="1.2" height="1.2"/><rect x="679" y="84" width="1.2" height="1.2"/><rect x="679" y="86" width="1.2" height="1.2"/><rect x="679" y="88" width="1.2" height="1.2"/><rect x="679" y="90" width="1.2" height="1.2"/><rect x="679" y="92" width="1.2" height="1.2"/><rect x="679" y="94" width="1.2" height="1.2"/><rect x="679" y="96" width="1.2" height="1.2"/><rect x="679" y="98" width="1.2" height="1.2"/><rect x="692" y="70" width="1.2" height="1.2"/><rect x="692" y="72" width="1.2" height="1.2"/><rect x="692" y="74" width="1.2" height="1.2"/><rect x="692" y="76" width="1.2" height="1.2"/><rect x="692" y="78" width="1.2" height="1.2"/><rect x="692" y="80" width="1.2" height="1.2"/><rect x="692" y="82" width="1.2" height="1.2"/><rect x="692" y="84" width="1.2" height="1.2"/><rect x="692" y="86" width="1.2" height="1.2"/><rect x="692" y="88" width="1.2" height="1.2"/><rect x="692" y="90" width="1.2" height="1.2"/><rect x="692" y="92" width="1.2" height="1.2"/><rect x="692" y="94" width="1.2" height="1.2"/><rect x="692" y="96" width="1.2" height="1.2"/><rect x="692" y="98" width="1.2" height="1.2"/><rect x="664" y="71.6" width="5" height="2"/><rect x="665.6" y="70" width="2" height="5"/><rect x="664" y="83.6" width="5" height="2"/><rect x="665.6" y="82" width="2" height="5"/><rect x="664" y="95.6" width="5" height="2"/><rect x="665.6" y="94" width="2" height="5"/><rect x="677" y="71.6" width="5" height="2"/><rect x="678.6" y="70" width="2" height="5"/><rect x="677" y="83.6" width="5" height="2"/><rect x="678.6" y="82" width="2" height="5"/><rect x="677" y="95.6" width="5" height="2"/><rect x="678.6" y="94" width="2" height="5"/><rect x="690" y="71.6" width="5" height="2"/><rect x="691.6" y="70" width="2" height="5"/><rect x="690" y="83.6" width="5" height="2"/><rect x="691.6" y="82" width="2" height="5"/><rect x="690" y="95.6" width="5" height="2"/><rect x="691.6" y="94" width="2" height="5"/></g><path d="M712 84 h32 M728 68 v32" stroke="#222" stroke-width="1.2"/><rect x="722" y="78" width="12" height="12" fill="#F0E030" stroke="#333" stroke-width="0.8"/><path d="M728 78 v12 M722 84 h12" stroke="#333" stroke-width="0.8"/><path d="M777 68 l7 8 h-4 v6 h6 v-4 l8 7 l-8 7 v-4 h-6 v6 h4 l-7 8 l-7 -8 h4 v-6 h-6 v4 l-8 -7 l8 -7 v4 h6 v-6 h-4z" fill="#1E6AE8" stroke="#0A2A80" stroke-width="1"/><path d="M822 92 l5 6" stroke="#8A5020" stroke-width="3.5"/><circle cx="816" cy="83" r="11" fill="#A8E4EC" stroke="#111" stroke-width="1.5"/><path d="M810 83 h12 M816 77 v12" stroke="#111" stroke-width="3"/><path d="M863 92 l5 6" stroke="#8A5020" stroke-width="3.5"/><circle cx="857" cy="83" r="11" fill="#A8E4EC" stroke="#111" stroke-width="1.5"/><path d="M851 83 h12" stroke="#111" stroke-width="3"/><path d="M904 92 l5 6" stroke="#8A5020" stroke-width="3.5"/><circle cx="898" cy="83" r="11" fill="#A8E4EC" stroke="#111" stroke-width="1.5"/><rect x="892" y="77" width="12" height="11" fill="#777" stroke="#222" stroke-width="1"/><rect x="931" y="70" width="18" height="28" fill="#FFF" stroke="#222" stroke-width="1" stroke-dasharray="1.5 1.5"/><circle cx="945" cy="79" r="9" fill="#A8E4EC" stroke="#111" stroke-width="1.4"/><path d="M950 86 l4 5" stroke="#8A5020" stroke-width="3"/><path d="M987 77 l4 6 q8 -8 16 -2 q6 6 -2 18 q14 -10 6 -20 q-8 -10 -20 -4 l-2 -6z" fill="#A8A8A8"/><path d="M1053 77 l-4 6 q-8 -8 -16 -2 q-6 6 2 18 q-14 -10 -6 -20 q8 -10 20 -4 l2 -6z" fill="#A8A8A8"/><path d="M1083 69 l10 22 M1097 69 l-10 22" stroke="#999" stroke-width="1.5"/><circle cx="1085" cy="95" r="3.5" fill="none" stroke="#999" stroke-width="1.5"/><circle cx="1095" cy="95" r="3.5" fill="none" stroke="#999" stroke-width="1.5"/><path d="M1118.5 70 h9 l7 7 v15 h-16 z" fill="#FFFFFF" stroke="#333" stroke-width="1.2" /><path d="M1127.5 70 v7 h7" fill="none" stroke="#333" stroke-width="1" /><path d="M1126.5 76.5 h10 l7 7 v16 h-17 z" fill="#FFFFFF" stroke="#333" stroke-width="1.2" /><path d="M1136.5 76.5 v7 h7" fill="none" stroke="#333" stroke-width="1" /><path d="M1129 83 h10 M1129 87 h10 M1129 91 h10 M1129 95 h10" stroke="#222" stroke-width="1"/><rect x="1161" y="71" width="22" height="27" rx="2" fill="#A8A8A8"/><rect x="1167" y="68" width="10" height="5" fill="#888"/><path d="M1165.5 76 h9 l7 7 v16 h-16 z" fill="#FFF" stroke="#777" stroke-width="1.2" /><path d="M1174.5 76 v7 h7" fill="none" stroke="#777" stroke-width="1" /><rect x="1205" y="69" width="31" height="9" fill="#9A9A9A" stroke="#888"/><rect x="1205" y="89" width="31" height="10" fill="#9A9A9A" stroke="#888"/><path d="M1217 78 v6 h-5 l8 6 l8 -6 h-5 v-6z" fill="#888"/><rect x="1246" y="69" width="31" height="9" fill="#9A9A9A" stroke="#888"/><rect x="1246" y="89" width="31" height="10" fill="#9A9A9A" stroke="#888"/><path d="M1258 78 v6 h-5 l8 6 l8 -6 h-5 v-6z" fill="#888"/><rect x="1246" y="69" width="31" height="9" fill="#FFF" stroke="#888"/><rect x="1287" y="68" width="31" height="31" fill="#9A9A9A" stroke="#8A8A8A"/><circle cx="1302.5" cy="83.5" r="9" fill="none" stroke="#888" stroke-width="3"/><rect x="1328" y="68" width="31" height="31" fill="#9A9A9A" stroke="#8A8A8A"/><path d="M1331 71 l25 25 M1356 71 l-25 25" stroke="#888" stroke-width="2.5"/><circle cx="1392" cy="82" r="11" fill="none" stroke="#888" stroke-width="1.5"/><path d="M1386 76 v12 l10 -6z" fill="none" stroke="#999" stroke-width="1"/><path d="M1398 90 l5 6" stroke="#777" stroke-width="2.5"/><path d="M1426 80 v16 l14 -8z" fill="#E8E8E8" stroke="#999" stroke-width="1"/><path d="M1418 84 h8 M1418 93 h8 M1440 88 h8" stroke="#444" stroke-width="1.2"/><path d="M1441 69 v12 M1435 75 h12" stroke="#AAA" stroke-width="3"/><rect x="1461" y="70" width="26" height="26" fill="#888" stroke="#555" stroke-width="1" stroke-dasharray="2 1"/><path d="M1463 97 l20 -20" stroke="#C8C8C8" stroke-width="5"/><circle cx="1465" cy="95" r="3" fill="#FFF" stroke="#555"/><path d="M1503 98 l16 -18" stroke="#888" stroke-width="4"/><path d="M1511 74 l8 -5 l12 9 l-5 4 l-4 -3 l-5 4z" fill="#777"/><rect x="1556.5" y="65.5" width="40" height="38" fill="#C8DCF0" stroke="#8AAACC" stroke-width="1"/><rect x="1563" y="70" width="11" height="7" fill="#30C030" stroke="#222" stroke-width="0.8"/><rect x="1579" y="91" width="11" height="7" fill="#30C030" stroke="#222" stroke-width="0.8"/><path d="M1574 73 h6 q4 0 4 4 v4 q0 4 -4 4 h-8 q-4 0 -4 4 v3 q0 4 4 4 h7" fill="none" stroke="#E03030" stroke-width="1.5"/><path d="M1568 77 v4 q0 4 4 4 h10 q4 0 4 4 v3" fill="none" stroke="#2040D0" stroke-width="1.5"/><path d="M1610 96 l4 -18 h6 v18z M1638 96 l-4 -18 h-6 v18z" fill="#1E50D0"/><rect x="1612" y="71" width="7" height="6" fill="#1E50D0"/><rect x="1629" y="71" width="7" height="6" fill="#1E50D0"/><rect x="1620" y="80" width="8" height="7" fill="#1E50D0"/><path d="M1654 96 l16 -16" stroke="#A8A8A8" stroke-width="4"/><path d="M1663 74 l8 -4 l11 9 l-5 3z" fill="#A8A8A8"/><path d="M1652 74 h10 M1652 79 h8" stroke="#999" stroke-width="2"/><text x="1676" y="96" font-family="Liberation Sans" font-size="13" fill="#999" text-anchor="start" font-weight="bold" >A</text><path d="M1702.5 69.5 h15 l7 7 v23 h-22 z" fill="#FFF" stroke="#888" stroke-width="1.2" /><path d="M1717.5 69.5 v7 h7" fill="none" stroke="#888" stroke-width="1" /><path d="M1713.5 78 v16 M1706 86 h15" stroke="#AAA" stroke-width="2.5"/><path d="M1746 69.5 h13 l7 7 v23 h-20 z" fill="#EEE" stroke="#888" stroke-width="1.2" /><path d="M1759 69.5 v7 h7" fill="none" stroke="#888" stroke-width="1" /><path d="M1742 70 l28 29 M1770 70 l-28 29" stroke="#999" stroke-width="1.5"/><rect x="1783" y="72" width="25" height="8" fill="#DDD" stroke="#999"/><rect x="1783" y="88" width="9" height="10" fill="#DDD" stroke="#999"/><rect x="1800" y="88" width="9" height="10" fill="#DDD" stroke="#999"/><path d="M1787 80 v8 M1806 75 q6 2 0 13" fill="none" stroke="#888" stroke-width="1"/><path d="M1833.5 68.5 h16 l7 7 v24 h-23 z" fill="#FFF" stroke="#333" stroke-width="1.2" /><path d="M1849.5 68.5 v7 h7" fill="none" stroke="#333" stroke-width="1" /><path d="M1850 73 l-9 13 h5 l-5 10 l10 -13 h-5z" fill="#2244DD"/><rect x="0" y="107" width="2558" height="38" fill="#E8F1F8" /><path d="M0 136 L25 112 H184 V145 H0z" fill="url(#gTab)"/><path d="M0 136 L25 112.5 H184.5 V144" fill="none" stroke="#9DB7CE" stroke-width="1"/><rect x="184" y="144" width="2374" height="1" fill="#9DB7CE" /><path d="M27 121.5 h19 M27 135.5 h19" stroke="#1A2A3A" stroke-width="1.2"/><path d="M33 116 l8 5.5 l-8 5.5z" fill="#3A8AE0" stroke="#1A2A3A" stroke-width="0.8"/><rect x="40.5" y="116" width="1.2" height="11" fill="#1A2A3A"/><rect x="32" y="130" width="3.5" height="11" fill="#2E6FC0"/><rect x="37.5" y="130" width="3.5" height="11" fill="#2E6FC0"/><text y="136" font-size="18" fill="#2A4868" font-weight="bold" ><tspan x="53.0">原</tspan><tspan x="71.0">理</tspan><tspan x="89.0">图</tspan><tspan x="107.0">绘</tspan><tspan x="125.0">制</tspan></text><path d="M155 121 l14 14 M169 121 l-14 14" stroke="#707070" stroke-width="2.6"/><rect x="0" y="145" width="2558" height="7" fill="#C9DDEE" /><rect x="168" y="145" width="2390" height="7" fill="#B6D4EC" /><rect x="0" y="145" width="46" height="1177" fill="url(#gLeft)" /><rect x="2" y="147" width="2" height="1.5" fill="#A8BCD0" /><rect x="6" y="147" width="2" height="1.5" fill="#A8BCD0" /><rect x="10" y="147" width="2" height="1.5" fill="#A8BCD0" /><rect x="14" y="147" width="2" height="1.5" fill="#A8BCD0" /><rect x="18" y="147" width="2" height="1.5" fill="#A8BCD0" /><rect x="22" y="147" width="2" height="1.5" fill="#A8BCD0" /><rect x="26" y="147" width="2" height="1.5" fill="#A8BCD0" /><rect x="30" y="147" width="2" height="1.5" fill="#A8BCD0" /><rect x="34" y="147" width="2" height="1.5" fill="#A8BCD0" /><rect x="38" y="147" width="2" height="1.5" fill="#A8BCD0" /><rect x="42" y="147" width="2" height="1.5" fill="#A8BCD0" /><rect x="44" y="145" width="1.5" height="1177" fill="#A5C0D8" /><rect x="46" y="145" width="122" height="1177" fill="#C8DCEE" /><rect x="46" y="152" width="121" height="101" fill="#E0E0D2"  stroke="#707070" stroke-width="1"/><rect x="46.5" y="158.5" width="120" height="1.6" fill="#3CC03C" /><rect x="46.5" y="244.6" width="120" height="1.6" fill="#3CC03C" /><rect x="56.8" y="160.8" width="100" height="84" fill="none" stroke="#101080" stroke-width="1.3"/><g fill="none" stroke="#0A0A0A" stroke-width="1"><path d="M82.5 189.5 h18 M84.5 187 v8 M82.5 196.5 h19 M85.5 189.5 v7 M82.5 202.5 h16 M81.5 200 v12 M81.5 208.5 h15 M86.5 203 v6 M96.5 208.5 v4 M79.5 215.5 h19 M79.5 215 v17 M79.5 221.5 h21"/><rect x="103.5" y="191.5" width="14" height="33"/><rect x="81.5" y="229.5" width="10" height="10"/></g><rect x="89" y="189" width="3" height="4" fill="#0A0A0A"/><rect x="95" y="192" width="3" height="3" fill="#0A0A0A"/><rect x="86" y="204" width="3" height="3" fill="#0A0A0A"/><rect x="92" y="219" width="4" height="3" fill="#0A0A0A"/><rect x="84" y="231" width="7" height="7" fill="#0A0A0A"/><rect x="84" y="232" width="2" height="5" fill="#E0E0D2"/><rect x="84" y="236" width="5" height="1.5" fill="#E0E0D2"/><rect x="46.5" y="257.5" width="120" height="33" fill="url(#gHdr)"  stroke="#A8C0D6" stroke-width="1"/><rect x="51" y="263" width="22" height="22" rx="3" fill="#1858D8"/><text x="62" y="281" font-family="Liberation Sans" font-size="19" fill="#FFF" text-anchor="middle" font-weight="normal" >P</text><clipPath id="cpT"><rect x="76" y="258" width="90" height="32"/></clipPath><text x="76" y="281" font-family="Liberation Sans" font-size="17" fill="#111" text-anchor="start" font-weight="normal" clip-path="url(#cpT)">TERMINALS</text><rect x="46" y="291" width="120.5" height="1030" fill="#FFFFFF" /><rect x="166" y="291" width="1.8" height="1031" fill="#3D6FA5" /><rect x="46" y="1320" width="122" height="1.8" fill="#3D6FA5" /><rect x="45.6" y="291" width="2" height="1031" fill="#3D6FA5" /><rect x="48" y="372" width="110" height="19.5" fill="#0A74DA" /><text x="50" y="307.5" font-family="Liberation Sans" font-size="16" fill="#111" text-anchor="start" font-weight="normal" >DEFAULT</text><text x="50" y="327.5" font-family="Liberation Sans" font-size="16" fill="#111" text-anchor="start" font-weight="normal" >INPUT</text><text x="50" y="347.5" font-family="Liberation Sans" font-size="16" fill="#111" text-anchor="start" font-weight="normal" >OUTPUT</text><text x="50" y="367.5" font-family="Liberation Sans" font-size="16" fill="#111" text-anchor="start" font-weight="normal" >BIDIR</text><text x="50" y="387.5" font-family="Liberation Sans" font-size="16" fill="#FFF" text-anchor="start" font-weight="normal" >POWER</text><text x="50" y="407.5" font-family="Liberation Sans" font-size="16" fill="#111" text-anchor="start" font-weight="normal" >GROUND</text><text x="50" y="427.5" font-family="Liberation Sans" font-size="16" fill="#111" text-anchor="start" font-weight="normal" >CHASSIS</text><text x="50" y="447.5" font-family="Liberation Sans" font-size="16" fill="#111" text-anchor="start" font-weight="normal" >RETURN</text><text x="50" y="467.5" font-family="Liberation Sans" font-size="16" fill="#111" text-anchor="start" font-weight="normal" >DYNAMIC</text><text x="50" y="487.5" font-family="Liberation Sans" font-size="16" fill="#111" text-anchor="start" font-weight="normal" >BUS</text><text x="50" y="507.5" font-family="Liberation Sans" font-size="16" fill="#111" text-anchor="start" font-weight="normal" >TESTPOINT</text><text x="50" y="527.5" font-family="Liberation Sans" font-size="16" fill="#111" text-anchor="start" font-weight="normal" >NC</text><rect x="0" y="1322" width="2558" height="46" fill="url(#gStatus)" /><rect x="4" y="1326" width="1.5" height="2" fill="#A8BCD0" /><rect x="4" y="1330" width="1.5" height="2" fill="#A8BCD0" /><rect x="4" y="1334" width="1.5" height="2" fill="#A8BCD0" /><rect x="4" y="1338" width="1.5" height="2" fill="#A8BCD0" /><rect x="4" y="1342" width="1.5" height="2" fill="#A8BCD0" /><rect x="4" y="1346" width="1.5" height="2" fill="#A8BCD0" /><rect x="4" y="1350" width="1.5" height="2" fill="#A8BCD0" /><rect x="4" y="1354" width="1.5" height="2" fill="#A8BCD0" /><rect x="4" y="1358" width="1.5" height="2" fill="#A8BCD0" /><rect x="4" y="1362" width="1.5" height="2" fill="#A8BCD0" /><rect x="385" y="1326" width="1.5" height="2" fill="#A8BCD0" /><rect x="385" y="1330" width="1.5" height="2" fill="#A8BCD0" /><rect x="385" y="1334" width="1.5" height="2" fill="#A8BCD0" /><rect x="385" y="1338" width="1.5" height="2" fill="#A8BCD0" /><rect x="385" y="1342" width="1.5" height="2" fill="#A8BCD0" /><rect x="385" y="1346" width="1.5" height="2" fill="#A8BCD0" /><rect x="385" y="1350" width="1.5" height="2" fill="#A8BCD0" /><rect x="385" y="1354" width="1.5" height="2" fill="#A8BCD0" /><rect x="385" y="1358" width="1.5" height="2" fill="#A8BCD0" /><rect x="385" y="1362" width="1.5" height="2" fill="#A8BCD0" /><rect x="797" y="1326" width="1.5" height="2" fill="#A8BCD0" /><rect x="797" y="1330" width="1.5" height="2" fill="#A8BCD0" /><rect x="797" y="1334" width="1.5" height="2" fill="#A8BCD0" /><rect x="797" y="1338" width="1.5" height="2" fill="#A8BCD0" /><rect x="797" y="1342" width="1.5" height="2" fill="#A8BCD0" /><rect x="797" y="1346" width="1.5" height="2" fill="#A8BCD0" /><rect x="797" y="1350" width="1.5" height="2" fill="#A8BCD0" /><rect x="797" y="1354" width="1.5" height="2" fill="#A8BCD0" /><rect x="797" y="1358" width="1.5" height="2" fill="#A8BCD0" /><rect x="797" y="1362" width="1.5" height="2" fill="#A8BCD0" /><path d="M20 1330 L51.5 1345.5 L20 1361z" fill="#22B822"/><path d="M20 1330 L51.5 1345.5 L20 1345.5z" fill="#3AD83A" opacity="0.6"/><rect x="72" y="1329" width="5.5" height="31" fill="#1A4ADB"/><path d="M81 1329 L103 1344.5 L81 1360z" fill="#1A4ADB"/><rect x="129" y="1329" width="8.5" height="31" fill="#1A4ADB"/><rect x="142.5" y="1329" width="8.5" height="31" fill="#1A4ADB"/><rect x="176" y="1330" width="31.5" height="31" fill="#1A44E8"/><rect x="221" y="1328" width="1" height="34" fill="#A8BCD0" /><rect x="376" y="1326" width="1" height="40" fill="#C8D8E8" /><circle cx="248.5" cy="1344.5" r="15.5" fill="#22A822"/><circle cx="248" cy="1341" r="11" fill="#4AD84A" opacity="0.5"/><circle cx="249" cy="1336" r="2.6" fill="#FFF"/><path d="M245 1341 h6 v12 h2 v2 h-8 v-2 h2 v-10 h-2z" fill="#FFF"/><text x="273" y="1351" font-family="Liberation Sans" font-size="16.5" fill="#111" text-anchor="start" font-weight="normal" textLength="96" lengthAdjust="spacingAndGlyphs">7 Message(s)</text><text x="394" y="1351" font-family="Liberation Sans" font-size="16.5" fill="#1E5A1E" text-anchor="start" font-weight="normal" textLength="307" lengthAdjust="spacingAndGlyphs">ANIMATING: 0.800000000s (CPU load 0%)</text><rect x="793" y="1326" width="1" height="40" fill="#C8D8E8" /><text x="812" y="1351" font-family="Liberation Sans" font-size="16" fill="#111" text-anchor="start" font-weight="normal" >x:</text><text x="849" y="1351" font-family="Liberation Sans" font-size="16" fill="#111" text-anchor="start" font-weight="normal" >-5900.0</text><text x="912" y="1351" font-family="Liberation Sans" font-size="16" fill="#111" text-anchor="start" font-weight="normal" >y:</text><text x="950" y="1351" font-family="Liberation Sans" font-size="16" fill="#111" text-anchor="start" font-weight="normal" >-3200.0</text><text x="2542" y="1351" font-family="Liberation Sans" font-size="16" fill="#101060" text-anchor="start" font-weight="normal" >th</text><rect x="2" y="437" width="42" height="1" fill="#A8BCD0" /><rect x="2" y="438" width="42" height="1" fill="#FFF" /><rect x="2" y="713" width="42" height="1" fill="#A8BCD0" /><rect x="2" y="714" width="42" height="1" fill="#FFF" /><text x="21" y="944" font-family="Liberation Sans" font-size="33" fill="#111" text-anchor="middle" font-weight="normal" style="font-family:Liberation Serif">A</text><path d="M12 167 L29 184 L21 185 L26 196 L22 198 L17 187 L12 192 Z" fill="#111"/><path d="M6 214 h10 M6 227 h10 M30 221 h7" stroke="#999" stroke-width="1.2"/><path d="M16 207 L30 221 L16 235 Z" fill="#F8C030" stroke="#8A6A10" stroke-width="1"/><path d="M6 260 h30 M21 245 v30" stroke="#111" stroke-width="1.5"/><rect x="14" y="253" width="13" height="13" fill="#2A7AE0"/><path d="M6 260 h30 M21 245 v30" stroke="#111" stroke-width="1.2" opacity="0.8"/><rect x="6" y="289" width="30" height="20" fill="none" stroke="#777" stroke-width="1" stroke-dasharray="2 1.5"/><path d="M8 325 h6 M17 325 h7 M26 325 h9 M8 330 h27 M8 335 h11 M22 335 h13 M8 340 h8 M19 340 h16 M8 345 h27 M8 350 h27" stroke="#777" stroke-width="1.6"/><rect x="6" y="371" width="30" height="10" fill="#1A5AE0"/><rect x="11" y="363" width="4" height="26" fill="#1A5AE0"/><rect x="26" y="363" width="4" height="26" fill="#1A5AE0"/><rect x="6" y="371" width="30" height="3" fill="#2A7AF0"/><path d="M13 404 h16 v5 h6 v5 h-6 v8 h6 v5 h-6 v6 h-16 v-6 h-6 v-5 h6 v-8 h-6 v-5 h6z" fill="#F8C838" stroke="#8A6A10" stroke-width="1"/><rect x="1.5" y="439.5" width="41" height="39" fill="#C4D8EA" stroke="#8AA8C8" stroke-width="1"/><path d="M7 443 h22 l6 6 l-6 6 h-22z M35 461 h-22 l-6 6 l6 6 h22z" fill="#F8C030" stroke="#222" stroke-width="1"/><path d="M6 489 h5 M6 505 h5 M32 497 h5" stroke="#555" stroke-width="1.5"/><path d="M17 484 L32 497 L17 510 Z" fill="none" stroke="#6AD06A" stroke-width="1.3"/><path d="M8 522 v30 h28" stroke="#111" stroke-width="1.3" fill="none"/><path d="M8 530 q6 -10 10 0 q5 10 10 0 q4 -6 8 0" fill="none" stroke="#E03030" stroke-width="1.5"/><path d="M8 542 q6 -8 10 0 q5 8 10 0 q4 -5 8 0" fill="none" stroke="#2030D0" stroke-width="1.5"/><path d="M11 552 v2 M16 552 v2 M21 552 v2 M26 552 v2 M31 552 v2 M6 527 h2 M6 535 h2 M6 543 h2" stroke="#111"/><rect x="5.5" y="562" width="31" height="29" fill="#FFF" stroke="#777" stroke-width="1"/><rect x="5.5" y="562" width="31" height="7" fill="#1010E0"/><circle cx="10" cy="565.5" r="1.5" fill="#FFF"/><circle cx="14.5" cy="565.5" r="1.5" fill="#FFF"/><circle cx="19" cy="565.5" r="1.5" fill="#FFF"/><circle cx="21" cy="614" r="13.5" fill="#C8C8D0" stroke="#888" stroke-width="1"/><path d="M12 618 q3 -12 9 -4 q6 8 9 -4" fill="none" stroke="#1A2AE0" stroke-width="3"/><path d="M7 665 l4 -5 M10 661 l12 -12 l4 4 l-12 12 z" fill="#F0C030" stroke="#333" stroke-width="1"/><path d="M24 650 q6 -8 8 -2 q2 6 2 14" fill="none" stroke="#333" stroke-width="1"/><rect x="6" y="679" width="29" height="11" fill="#FFF" stroke="#333" stroke-width="1"/><path d="M8 690 q13 -12 26 0" fill="none" stroke="#2030C0" stroke-width="1.2"/><path d="M21 690 l5 -9" stroke="#E02020" stroke-width="1.5"/><rect x="10" y="690" width="21" height="15" fill="#555" stroke="#333" stroke-width="1"/><rect x="23" y="694" width="5" height="5" fill="#F0E040"/><path d="M12 694 h8 M12 697 h8 M12 700 h8" stroke="#BBB" stroke-width="1"/><path d="M6 749 L35 721" stroke="#111" stroke-width="2.2"/><rect x="7.5" y="761" width="27" height="26" fill="#30B8B0" stroke="#111" stroke-width="1.2"/><circle cx="21" cy="814" r="14" fill="#30B8B0" stroke="#111" stroke-width="1.2"/><path d="M6 840 q22 0 29 26" fill="none" stroke="#111" stroke-width="1.2"/><path d="M6 840 v26 h29" fill="none" stroke="#2030D0" stroke-width="1" stroke-dasharray="1.5 1.5"/><path d="M14 881 q-9 0 -9 10 q0 10 9 10 q4 0 7 -3 q3 3 7 3 q8 0 8 -8 q0 -8 -8 -8 q-4 0 -6 2 q-3 -6 -8 -6z" fill="#30B8B0" stroke="#111" stroke-width="1.2"/><rect x="7.5" y="957.5" width="27" height="27" fill="#30B8B0" stroke="#111" stroke-width="1.2"/><text x="21" y="980" font-family="Liberation Sans" font-size="24" fill="#111" text-anchor="middle" font-weight="bold" >S</text><path d="M6 1009 h30 M21 994 v30" stroke="#111" stroke-width="1.3"/><rect x="15" y="1003" width="12" height="12" fill="#30B8B0" stroke="#111" stroke-width="0.8"/><text x="9" y="306" font-family="Liberation Sans" font-size="15" fill="#1A2A9A" text-anchor="start" font-weight="normal" >LBL</text><rect x="0" y="1030" width="45.6" height="88" fill="#E1EBF1" /><rect x="1" y="1030.5" width="42" height="1.2" fill="#A8B8C8" /><rect x="2" y="1123" width="2" height="1.5" fill="#A8BCD0" /><rect x="6" y="1123" width="2" height="1.5" fill="#A8BCD0" /><rect x="10" y="1123" width="2" height="1.5" fill="#A8BCD0" /><rect x="14" y="1123" width="2" height="1.5" fill="#A8BCD0" /><rect x="18" y="1123" width="2" height="1.5" fill="#A8BCD0" /><rect x="22" y="1123" width="2" height="1.5" fill="#A8BCD0" /><rect x="26" y="1123" width="2" height="1.5" fill="#A8BCD0" /><rect x="30" y="1123" width="2" height="1.5" fill="#A8BCD0" /><rect x="34" y="1123" width="2" height="1.5" fill="#A8BCD0" /><rect x="38" y="1123" width="2" height="1.5" fill="#A8BCD0" /><rect x="42" y="1123" width="2" height="1.5" fill="#A8BCD0" /><path d="M28.5 1139.5 A11.5 11.5 0 1 0 29 1157" fill="none" stroke="#1E6AE0" stroke-width="4.5"/><path d="M23 1133 L35 1135 L29 1147 Z" fill="#1E6AE0"/><path d="M13.5 1179.5 A11.5 11.5 0 1 1 13 1197" fill="none" stroke="#1E6AE0" stroke-width="4.5"/><path d="M19 1173 L7 1175 L13 1187 Z" fill="#1E6AE0"/><rect x="1" y="1207" width="44" height="23" fill="#FFFFFF" /><rect x="1" y="1207" width="44" height="1.5" fill="#222" /><rect x="1" y="1207" width="1.5" height="23" fill="#222" /><text x="4" y="1226" font-family="Liberation Sans" font-size="16" fill="#111" text-anchor="start" font-weight="normal" >0°</text><rect x="2" y="1237" width="42" height="1" fill="#A8BCD0" /><path d="M5 1257 l9 -8 v5 h14 v-5 l9 8 l-9 8 v-5 h-14 v5z" fill="#2A8AE0" stroke="#1A5AB0" stroke-width="0.6"/><path d="M21 1280 l8 9 h-5 v12 h5 l-8 9 l-8 -9 h5 v-12 h-5z" fill="#2A8AE0" stroke="#1A5AB0" stroke-width="0.6"/><rect x="1537" y="590.5" width="7" height="3" fill="#8A0A0A" /><rect x="1541" y="590.5" width="3" height="440" fill="#8A0A0A" /><rect x="1537" y="1027" width="7" height="3" fill="#8A0A0A" /><rect x="1537" y="593" width="4" height="434" fill="#C8C8B0" /><rect x="1544" y="606.5" width="32" height="3" fill="#8A0A0A" /><rect x="1549" y="597" width="6" height="6" fill="#808080" /><text x="1558.5" y="606" font-family="Liberation Sans" font-size="14" fill="#111" text-anchor="start" font-weight="normal" >39</text><rect x="1544" y="623.5" width="32" height="3" fill="#8A0A0A" /><rect x="1549" y="614" width="6" height="6" fill="#808080" /><text x="1558.5" y="623" font-family="Liberation Sans" font-size="14" fill="#111" text-anchor="start" font-weight="normal" >38</text><rect x="1544" y="639.5" width="32" height="3" fill="#8A0A0A" /><rect x="1549" y="630" width="6" height="6" fill="#808080" /><text x="1558.5" y="639" font-family="Liberation Sans" font-size="14" fill="#111" text-anchor="start" font-weight="normal" >37</text><rect x="1544" y="655.5" width="32" height="3" fill="#8A0A0A" /><rect x="1549" y="646" width="6" height="6" fill="#808080" /><text x="1558.5" y="655" font-family="Liberation Sans" font-size="14" fill="#111" text-anchor="start" font-weight="normal" >36</text><rect x="1544" y="671.5" width="32" height="3" fill="#8A0A0A" /><rect x="1549" y="662" width="6" height="6" fill="#808080" /><text x="1558.5" y="671" font-family="Liberation Sans" font-size="14" fill="#111" text-anchor="start" font-weight="normal" >35</text><rect x="1544" y="687.5" width="32" height="3" fill="#8A0A0A" /><rect x="1549" y="678" width="6" height="6" fill="#808080" /><text x="1558.5" y="687" font-family="Liberation Sans" font-size="14" fill="#111" text-anchor="start" font-weight="normal" >34</text><rect x="1544" y="704.5" width="32" height="3" fill="#8A0A0A" /><rect x="1549" y="695" width="6" height="6" fill="#808080" /><text x="1558.5" y="704" font-family="Liberation Sans" font-size="14" fill="#111" text-anchor="start" font-weight="normal" >33</text><rect x="1544" y="720.5" width="32" height="3" fill="#8A0A0A" /><rect x="1549" y="711" width="6" height="6" fill="#808080" /><text x="1558.5" y="720" font-family="Liberation Sans" font-size="14" fill="#111" text-anchor="start" font-weight="normal" >32</text><rect x="1544" y="752.5" width="32" height="3" fill="#8A0A0A" /><rect x="1549" y="743" width="6" height="6" fill="#E84848" /><text x="1558.5" y="752" font-family="Liberation Sans" font-size="14" fill="#111" text-anchor="start" font-weight="normal" >21</text><rect x="1544" y="768.5" width="32" height="3" fill="#8A0A0A" /><rect x="1549" y="759" width="6" height="6" fill="#E84848" /><text x="1558.5" y="768" font-family="Liberation Sans" font-size="14" fill="#111" text-anchor="start" font-weight="normal" >22</text><rect x="1544" y="785.5" width="32" height="3" fill="#8A0A0A" /><rect x="1549" y="776" width="6" height="6" fill="#E84848" /><text x="1558.5" y="785" font-family="Liberation Sans" font-size="14" fill="#111" text-anchor="start" font-weight="normal" >23</text><rect x="1544" y="801.5" width="32" height="3" fill="#8A0A0A" /><rect x="1549" y="792" width="6" height="6" fill="#E84848" /><text x="1558.5" y="801" font-family="Liberation Sans" font-size="14" fill="#111" text-anchor="start" font-weight="normal" >24</text><rect x="1544" y="817.5" width="32" height="3" fill="#8A0A0A" /><rect x="1549" y="808" width="6" height="6" fill="#E84848" /><text x="1558.5" y="817" font-family="Liberation Sans" font-size="14" fill="#111" text-anchor="start" font-weight="normal" >25</text><rect x="1544" y="833.5" width="32" height="3" fill="#8A0A0A" /><rect x="1549" y="824" width="6" height="6" fill="#E84848" /><text x="1558.5" y="833" font-family="Liberation Sans" font-size="14" fill="#111" text-anchor="start" font-weight="normal" >26</text><rect x="1544" y="849.5" width="32" height="3" fill="#8A0A0A" /><rect x="1549" y="840" width="6" height="6" fill="#E84848" /><text x="1558.5" y="849" font-family="Liberation Sans" font-size="14" fill="#111" text-anchor="start" font-weight="normal" >27</text><rect x="1544" y="866.5" width="32" height="3" fill="#8A0A0A" /><rect x="1549" y="857" width="6" height="6" fill="#E84848" /><text x="1558.5" y="866" font-family="Liberation Sans" font-size="14" fill="#111" text-anchor="start" font-weight="normal" >28</text><rect x="1544" y="898.5" width="32" height="3" fill="#8A0A0A" /><rect x="1549" y="889" width="6" height="6" fill="#E84848" /><text x="1558.5" y="898" font-family="Liberation Sans" font-size="14" fill="#111" text-anchor="start" font-weight="normal" >10</text><rect x="1544" y="914.5" width="32" height="3" fill="#8A0A0A" /><rect x="1549" y="905" width="6" height="6" fill="#E84848" /><text x="1558.5" y="914" font-family="Liberation Sans" font-size="14" fill="#111" text-anchor="start" font-weight="normal" >11</text><rect x="1544" y="930.5" width="32" height="3" fill="#8A0A0A" /><rect x="1549" y="921" width="6" height="6" fill="#E84848" /><text x="1558.5" y="930" font-family="Liberation Sans" font-size="14" fill="#111" text-anchor="start" font-weight="normal" >12</text><rect x="1544" y="947.5" width="32" height="3" fill="#8A0A0A" /><rect x="1549" y="938" width="6" height="6" fill="#E84848" /><text x="1558.5" y="947" font-family="Liberation Sans" font-size="14" fill="#111" text-anchor="start" font-weight="normal" >13</text><rect x="1544" y="963.5" width="32" height="3" fill="#8A0A0A" /><rect x="1549" y="954" width="6" height="6" fill="#E84848" /><text x="1558.5" y="963" font-family="Liberation Sans" font-size="14" fill="#111" text-anchor="start" font-weight="normal" >14</text><rect x="1544" y="979.5" width="32" height="3" fill="#8A0A0A" /><rect x="1549" y="970" width="6" height="6" fill="#E84848" /><text x="1558.5" y="979" font-family="Liberation Sans" font-size="14" fill="#111" text-anchor="start" font-weight="normal" >15</text><rect x="1544" y="995.5" width="32" height="3" fill="#8A0A0A" /><rect x="1549" y="986" width="6" height="6" fill="#E84848" /><text x="1558.5" y="995" font-family="Liberation Sans" font-size="14" fill="#111" text-anchor="start" font-weight="normal" >16</text><rect x="1544" y="1011.5" width="32" height="3" fill="#8A0A0A" /><rect x="1549" y="1002" width="6" height="6" fill="#E84848" /><text x="1558.5" y="1011" font-family="Liberation Sans" font-size="14" fill="#111" text-anchor="start" font-weight="normal" >17</text><rect x="958" y="1173" width="147" height="68" fill="#8A0A0A" /><rect x="961" y="1173" width="141" height="64.5" fill="#CACAB0" /><rect x="961" y="1173" width="141" height="64.5" fill="url(#gSym)"/><rect x="925" y="1189.5" width="34" height="3" fill="#8A0A0A" /><rect x="925" y="1221.7" width="34" height="3" fill="#8A0A0A" /><text x="966.5" y="1197" font-family="Liberation Sans" font-size="14" fill="#111" text-anchor="start" font-weight="normal" >C</text><text x="966.5" y="1229" font-family="Liberation Sans" font-size="14" fill="#111" text-anchor="start" font-weight="normal" >D</text><rect x="998" y="1173" width="91" height="43" fill="#000000" /><rect x="999.5" y="1176.0" width="6.3" height="6.3" fill="#003200"/><rect x="999.5" y="1184.1" width="6.3" height="6.3" fill="#003200"/><rect x="999.5" y="1192.2" width="6.3" height="6.3" fill="#003200"/><rect x="999.5" y="1200.3" width="6.3" height="6.3" fill="#003200"/><rect x="999.5" y="1208.4" width="6.3" height="6.3" fill="#003200"/><rect x="1007.6" y="1176.0" width="6.3" height="6.3" fill="#003200"/><rect x="1007.6" y="1184.1" width="6.3" height="6.3" fill="#003200"/><rect x="1007.6" y="1192.2" width="6.3" height="6.3" fill="#003200"/><rect x="1007.6" y="1200.3" width="6.3" height="6.3" fill="#003200"/><rect x="1007.6" y="1208.4" width="6.3" height="6.3" fill="#003200"/><rect x="1015.7" y="1176.0" width="6.3" height="6.3" fill="#003200"/><rect x="1015.7" y="1184.1" width="6.3" height="6.3" fill="#003200"/><rect x="1015.7" y="1192.2" width="6.3" height="6.3" fill="#003200"/><rect x="1015.7" y="1200.3" width="6.3" height="6.3" fill="#003200"/><rect x="1015.7" y="1208.4" width="6.3" height="6.3" fill="#003200"/><rect x="1023.8" y="1176.0" width="6.3" height="6.3" fill="#003200"/><rect x="1023.8" y="1184.1" width="6.3" height="6.3" fill="#003200"/><rect x="1023.8" y="1192.2" width="6.3" height="6.3" fill="#003200"/><rect x="1023.8" y="1200.3" width="6.3" height="6.3" fill="#003200"/><rect x="1023.8" y="1208.4" width="6.3" height="6.3" fill="#003200"/><rect x="1031.9" y="1176.0" width="6.3" height="6.3" fill="#003200"/><rect x="1031.9" y="1184.1" width="6.3" height="6.3" fill="#003200"/><rect x="1031.9" y="1192.2" width="6.3" height="6.3" fill="#003200"/><rect x="1031.9" y="1200.3" width="6.3" height="6.3" fill="#003200"/><rect x="1031.9" y="1208.4" width="6.3" height="6.3" fill="#003200"/><rect x="1040.0" y="1176.0" width="6.3" height="6.3" fill="#003200"/><rect x="1040.0" y="1184.1" width="6.3" height="6.3" fill="#003200"/><rect x="1040.0" y="1192.2" width="6.3" height="6.3" fill="#003200"/><rect x="1040.0" y="1200.3" width="6.3" height="6.3" fill="#003200"/><rect x="1040.0" y="1208.4" width="6.3" height="6.3" fill="#003200"/><rect x="1048.1" y="1176.0" width="6.3" height="6.3" fill="#003200"/><rect x="1048.1" y="1184.1" width="6.3" height="6.3" fill="#003200"/><rect x="1048.1" y="1192.2" width="6.3" height="6.3" fill="#003200"/><rect x="1048.1" y="1200.3" width="6.3" height="6.3" fill="#003200"/><rect x="1048.1" y="1208.4" width="6.3" height="6.3" fill="#003200"/><rect x="1056.2" y="1176.0" width="6.3" height="6.3" fill="#003200"/><rect x="1056.2" y="1184.1" width="6.3" height="6.3" fill="#003200"/><rect x="1056.2" y="1192.2" width="6.3" height="6.3" fill="#003200"/><rect x="1056.2" y="1200.3" width="6.3" height="6.3" fill="#003200"/><rect x="1056.2" y="1208.4" width="6.3" height="6.3" fill="#003200"/><rect x="1064.3" y="1176.0" width="6.3" height="6.3" fill="#003200"/><rect x="1064.3" y="1184.1" width="6.3" height="6.3" fill="#003200"/><rect x="1064.3" y="1192.2" width="6.3" height="6.3" fill="#003200"/><rect x="1064.3" y="1200.3" width="6.3" height="6.3" fill="#003200"/><rect x="1064.3" y="1208.4" width="6.3" height="6.3" fill="#003200"/><rect x="1072.4" y="1176.0" width="6.3" height="6.3" fill="#003200"/><rect x="1072.4" y="1184.1" width="6.3" height="6.3" fill="#003200"/><rect x="1072.4" y="1192.2" width="6.3" height="6.3" fill="#003200"/><rect x="1072.4" y="1200.3" width="6.3" height="6.3" fill="#003200"/><rect x="1072.4" y="1208.4" width="6.3" height="6.3" fill="#003200"/><rect x="1080.5" y="1176.0" width="6.3" height="6.3" fill="#003200"/><rect x="1080.5" y="1184.1" width="6.3" height="6.3" fill="#003200"/><rect x="1080.5" y="1192.2" width="6.3" height="6.3" fill="#003200"/><rect x="1080.5" y="1200.3" width="6.3" height="6.3" fill="#003200"/><rect x="1080.5" y="1208.4" width="6.3" height="6.3" fill="#003200"/><path d="M998 1191 H1006.8 V1181.2 H1015.4 V1191 H1023.5 V1181.2 H1031.5 V1191 H1039.5 V1181.2 H1047.6 V1191 H1055.8 V1181.2 H1064 V1191 H1072 V1181.2 H1081 V1191 H1089" fill="none" stroke="#F01010" stroke-width="2.8" /><path d="M998.2 1204.4 L1002.5 1201.0 L1009.0 1207.8 L1015.4 1201.0 L1021.9 1207.8 L1028.3 1201.0 L1034.8 1207.8 L1041.2 1201.0 L1047.7 1207.8 L1054.1 1201.0 L1060.5 1207.8 L1067.0 1201.0 L1073.5 1207.8 L1079.9 1201.0 L1086.3 1207.8 L1089.0 1204.2" fill="none" stroke="#18F018" stroke-width="2.8" stroke-linejoin="round"/><defs><linearGradient id="gIme" x1="0" y1="0" x2="1" y2="0"><stop offset="0" stop-color="#7FA6D4"/><stop offset="0.45" stop-color="#6488C2"/><stop offset="1" stop-color="#6F9CD2"/></linearGradient><radialGradient id="gBok" cx="0.5" cy="0.5" r="0.5"><stop offset="0" stop-color="#FFF6D8"/><stop offset="0.7" stop-color="#F2E4BC" stop-opacity="0.85"/><stop offset="1" stop-color="#E8D8B0" stop-opacity="0"/></radialGradient><radialGradient id="gDark" cx="0.5" cy="0.5" r="0.5"><stop offset="0" stop-color="#4A3A58" stop-opacity="0.9"/><stop offset="1" stop-color="#4A3A58" stop-opacity="0"/></radialGradient><radialGradient id="gPale" cx="0.5" cy="0.5" r="0.5"><stop offset="0" stop-color="#E8E0D0" stop-opacity="0.9"/><stop offset="1" stop-color="#E8E0D0" stop-opacity="0"/></radialGradient><linearGradient id="gSym" x1="0" y1="0" x2="0" y2="1"><stop offset="0" stop-color="#C0C0A0"/><stop offset="1" stop-color="#D4D4BC"/></linearGradient><clipPath id="cpIme"><rect x="2214.5" y="1274.5" width="161" height="68" rx="10"/></clipPath></defs><rect x="2207.5" y="1266.5" width="175" height="83" rx="15" fill="#A8CCEA" opacity="0.55"/><rect x="2211" y="1271" width="168" height="75" rx="12" fill="#FFFFFF"/><g clip-path="url(#cpIme)"><rect x="2214.5" y="1274.5" width="161" height="68" fill="url(#gIme)"/><ellipse cx="2350" cy="1280" rx="40" ry="16" fill="url(#gPale)"/><ellipse cx="2300" cy="1287" rx="34" ry="17" fill="url(#gDark)"/><circle cx="2309" cy="1305" r="10.5" fill="url(#gBok)"/><circle cx="2333" cy="1297" r="10" fill="url(#gBok)"/><circle cx="2362" cy="1283" r="6.5" fill="url(#gBok)"/><circle cx="2304" cy="1322" r="8" fill="url(#gBok)" opacity="0.45"/><circle cx="2367" cy="1326" r="9" fill="url(#gBok)" opacity="0.35"/><circle cx="2340" cy="1335" r="6" fill="url(#gBok)" opacity="0.3"/><path d="M2324 1309 L2374 1279" stroke="#3A3A48" stroke-width="1.3"/><path d="M2327 1311 L2376 1283" stroke="#E8E8F0" stroke-width="0.8" opacity="0.6"/></g><path d="M2227.5 1287.5 h17 v11 h-17 z M2236 1281 v23" fill="none" stroke="#F4F8FF" stroke-width="2"/><path d="M2229 1315 l-3 5 M2231 1314 h5 M2238 1315 l-2 4 M2240 1314 h5 M2229 1320 v14 M2233 1322 h12 v12 M2236 1326 h6 M2236 1330 h6" fill="none" stroke="#F4F8FF" stroke-width="1.8"/><path d="M2268 1297 c-6 -4 -7 -11 -1 -11 c3 0 4 2 4 3 c0 -1 1 -3 4 -3 c6 0 5 7 -1 11 l-3 3z" fill="#FFF"/><circle cx="2271" cy="1292" r="2" fill="#7FA6D4"/><circle cx="2264.5" cy="1326.5" r="2.6" fill="none" stroke="#FFF" stroke-width="1.6"/><path d="M2272 1319 q2 5 -3 9" stroke="#FFF" stroke-width="2.6" fill="none"/><path d="M427 1281 l2 -9 l9 -10 l3 3 l-9 10 z" fill="#FFF" stroke="#111" stroke-width="1.4"/><path d="M426.5 1281.5 l1.5 -5 l3.5 3.5z" fill="#111"/><rect x="159" y="291" width="1378" height="882" rx="4" fill="#F0F0F0" filter="url(#shadow)"/><rect x="159" y="291" width="1378" height="36" fill="#F3F3F3"  rx="4"/><text x="163" y="313.5" font-family="Liberation Sans" font-size="17.5" fill="#8E8E8E" text-anchor="start" font-weight="normal" >Digital Oscilloscope</text><rect x="1506" y="292" width="30" height="30" fill="#DADADA" /><path d="M1517 303 l8 8 M1525 303 l-8 8" stroke="#F4F4F4" stroke-width="1.6"/><rect x="161" y="328" width="808" height="813" fill="#2C2C2C" /><rect x="163" y="330.5" width="804" height="805" fill="#C8D4C8" /><rect x="165" y="332" width="801.5" height="802" fill="#000000" /><rect x="966" y="332" width="1.2" height="802" fill="#D0D0D0"  opacity="0.6"/><rect x="161" y="1134" width="808" height="1.6" fill="#A0A0A0" /><rect x="161" y="1135.6" width="808" height="2.2" fill="#FFFFFF" /><rect x="161" y="1138" width="810" height="2.6" fill="#2A2A2A" /><rect x="159" y="1140.6" width="812" height="31.5" fill="#F0F0F0" /><rect x="159" y="1172" width="812" height="1.8" fill="#151515" /><rect x="767" y="1148" width="26" height="17" fill="#888888" /><rect x="205" y="332" width="1" height="802" fill="#173F17"/><rect x="165" y="372" width="801" height="1" fill="#173F17"/><rect x="245" y="332" width="1" height="802" fill="#173F17"/><rect x="165" y="412" width="801" height="1" fill="#173F17"/><rect x="285" y="332" width="1" height="802" fill="#173F17"/><rect x="165" y="452" width="801" height="1" fill="#173F17"/><rect x="325" y="332" width="1" height="802" fill="#173F17"/><rect x="165" y="492" width="801" height="1" fill="#173F17"/><rect x="365" y="332" width="1" height="802" fill="#173F17"/><rect x="165" y="532" width="801" height="1" fill="#173F17"/><rect x="405" y="332" width="1" height="802" fill="#173F17"/><rect x="165" y="572" width="801" height="1" fill="#173F17"/><rect x="445" y="332" width="1" height="802" fill="#173F17"/><rect x="165" y="612" width="801" height="1" fill="#173F17"/><rect x="485" y="332" width="1" height="802" fill="#173F17"/><rect x="165" y="652" width="801" height="1" fill="#173F17"/><rect x="525" y="332" width="1" height="802" fill="#173F17"/><rect x="165" y="692" width="801" height="1" fill="#173F17"/><rect x="565" y="332" width="1" height="802" fill="#173F17"/><rect x="165" y="732" width="801" height="1" fill="#173F17"/><rect x="605" y="332" width="1" height="802" fill="#173F17"/><rect x="165" y="772" width="801" height="1" fill="#173F17"/><rect x="645" y="332" width="1" height="802" fill="#173F17"/><rect x="165" y="812" width="801" height="1" fill="#173F17"/><rect x="685" y="332" width="1" height="802" fill="#173F17"/><rect x="165" y="852" width="801" height="1" fill="#173F17"/><rect x="725" y="332" width="1" height="802" fill="#173F17"/><rect x="165" y="892" width="801" height="1" fill="#173F17"/><rect x="765" y="332" width="1" height="802" fill="#173F17"/><rect x="165" y="932" width="801" height="1" fill="#173F17"/><rect x="805" y="332" width="1" height="802" fill="#173F17"/><rect x="165" y="972" width="801" height="1" fill="#173F17"/><rect x="845" y="332" width="1" height="802" fill="#173F17"/><rect x="165" y="1012" width="801" height="1" fill="#173F17"/><rect x="885" y="332" width="1" height="802" fill="#173F17"/><rect x="165" y="1052" width="801" height="1" fill="#173F17"/><rect x="925" y="332" width="1" height="802" fill="#173F17"/><rect x="165" y="1092" width="801" height="1" fill="#173F17"/><rect x="165" y="852" width="801" height="1.5" fill="#A8C4A8" /><rect x="165" y="772" width="801" height="1.5" fill="#C06878" /><rect x="165" y="692" width="801" height="1.5" fill="#58B8C8" /><path d="M165 620 H179.5 V609.5 H235.5 V620 H291.5 V609.5 H347.5 V620 H403.5 V609.5 H459.5 V620 H515.5 V609.5 H571.5 V620 H627.5 V609.5 H683.5 V620 H739.5 V609.5 H795.5 V620 H851.5 V609.5 H907.5 V620 H963.5 V609.5 H966" fill="none" stroke="#E0DC70" stroke-width="1.5" /><rect x="971" y="326" width="566" height="848" fill="#202020" /><rect x="974" y="327" width="185" height="50.5" fill="#A2A2A6" /><rect x="974" y="327" width="185" height="2" fill="#F4F4F4" /><rect x="974" y="327" width="2" height="50.5" fill="#F4F4F4" /><rect x="974" y="376.0" width="185" height="1.5" fill="#D4D4D6" /><rect x="1157.5" y="327" width="1.5" height="50.5" fill="#D4D4D6" /><rect x="974" y="380" width="185" height="367.5" fill="#A2A2A6" /><rect x="974" y="380" width="185" height="2" fill="#F4F4F4" /><rect x="974" y="380" width="2" height="367.5" fill="#F4F4F4" /><rect x="974" y="746.0" width="185" height="1.5" fill="#D4D4D6" /><rect x="1157.5" y="380" width="1.5" height="367.5" fill="#D4D4D6" /><rect x="974" y="750.5" width="185" height="51.0" fill="#A2A2A6" /><rect x="974" y="750.5" width="185" height="2" fill="#F4F4F4" /><rect x="974" y="750.5" width="2" height="51.0" fill="#F4F4F4" /><rect x="974" y="800.0" width="185" height="1.5" fill="#D4D4D6" /><rect x="1157.5" y="750.5" width="1.5" height="51.0" fill="#D4D4D6" /><rect x="974" y="804" width="185" height="367.5" fill="#A2A2A6" /><rect x="974" y="804" width="185" height="2" fill="#F4F4F4" /><rect x="974" y="804" width="2" height="367.5" fill="#F4F4F4" /><rect x="974" y="1170.0" width="185" height="1.5" fill="#D4D4D6" /><rect x="1157.5" y="804" width="1.5" height="367.5" fill="#D4D4D6" /><rect x="1162" y="327" width="185" height="50.5" fill="#A2A2A6" /><rect x="1162" y="327" width="185" height="2" fill="#F4F4F4" /><rect x="1162" y="327" width="2" height="50.5" fill="#F4F4F4" /><rect x="1162" y="376.0" width="185" height="1.5" fill="#D4D4D6" /><rect x="1345.5" y="327" width="1.5" height="50.5" fill="#D4D4D6" /><rect x="1162" y="380" width="185" height="367.5" fill="#A2A2A6" /><rect x="1162" y="380" width="185" height="2" fill="#F4F4F4" /><rect x="1162" y="380" width="2" height="367.5" fill="#F4F4F4" /><rect x="1162" y="746.0" width="185" height="1.5" fill="#D4D4D6" /><rect x="1345.5" y="380" width="1.5" height="367.5" fill="#D4D4D6" /><rect x="1162" y="750.5" width="185" height="51.0" fill="#A2A2A6" /><rect x="1162" y="750.5" width="185" height="2" fill="#F4F4F4" /><rect x="1162" y="750.5" width="2" height="51.0" fill="#F4F4F4" /><rect x="1162" y="800.0" width="185" height="1.5" fill="#D4D4D6" /><rect x="1345.5" y="750.5" width="1.5" height="51.0" fill="#D4D4D6" /><rect x="1162" y="804" width="185" height="367.5" fill="#A2A2A6" /><rect x="1162" y="804" width="185" height="2" fill="#F4F4F4" /><rect x="1162" y="804" width="2" height="367.5" fill="#F4F4F4" /><rect x="1162" y="1170.0" width="185" height="1.5" fill="#D4D4D6" /><rect x="1345.5" y="804" width="1.5" height="367.5" fill="#D4D4D6" /><rect x="1350" y="327" width="185" height="50.5" fill="#A2A2A6" /><rect x="1350" y="327" width="185" height="2" fill="#F4F4F4" /><rect x="1350" y="327" width="2" height="50.5" fill="#F4F4F4" /><rect x="1350" y="376.0" width="185" height="1.5" fill="#D4D4D6" /><rect x="1533.5" y="327" width="1.5" height="50.5" fill="#D4D4D6" /><rect x="1350" y="380" width="185" height="367.5" fill="#A2A2A6" /><rect x="1350" y="380" width="185" height="2" fill="#F4F4F4" /><rect x="1350" y="380" width="2" height="367.5" fill="#F4F4F4" /><rect x="1350" y="746.0" width="185" height="1.5" fill="#D4D4D6" /><rect x="1533.5" y="380" width="1.5" height="367.5" fill="#D4D4D6" /><rect x="1350" y="750.5" width="185" height="51.0" fill="#A2A2A6" /><rect x="1350" y="750.5" width="185" height="2" fill="#F4F4F4" /><rect x="1350" y="750.5" width="2" height="51.0" fill="#F4F4F4" /><rect x="1350" y="800.0" width="185" height="1.5" fill="#D4D4D6" /><rect x="1533.5" y="750.5" width="1.5" height="51.0" fill="#D4D4D6" /><rect x="1350" y="804" width="185" height="367.5" fill="#A2A2A6" /><rect x="1350" y="804" width="185" height="2" fill="#F4F4F4" /><rect x="1350" y="804" width="2" height="367.5" fill="#F4F4F4" /><rect x="1350" y="1170.0" width="185" height="1.5" fill="#D4D4D6" /><rect x="1533.5" y="804" width="1.5" height="367.5" fill="#D4D4D6" /><text x="1257.5" y="363.8" font-family="Liberation Sans" font-size="24.5" fill="#F0F030" text-anchor="middle" font-weight="bold" >Channel A</text><text x="1219.8" y="399.8" font-family="Liberation Sans" font-size="16" fill="#0A0A0A" text-anchor="middle" font-weight="bold" >Position</text><rect x="1183" y="404" width="80" height="161" fill="#F4F4F4" /><rect x="1185.5" y="406.5" width="77.5" height="158.5" fill="#101010" /><rect x="1187" y="408" width="74" height="155" fill="#A2A2A6" /><rect x="1197.3" y="409.5" width="1.5" height="152" fill="#F0F0F0" /><rect x="1258.5" y="409.5" width="1.5" height="152" fill="#F0F0F0" /><rect x="1187" y="561.5" width="74" height="1.5" fill="#F0F0F0" /><rect x="1199" y="410" width="50" height="149.8" fill="url(#gDrumV)" /><rect x="1199" y="410" width="50" height="149.8" fill="url(#gDrumSide)" /><rect x="1199" y="410" width="2" height="149.8" fill="#3A3A3A" /><rect x="1247" y="410" width="2" height="149.8" fill="#3A3A3A" /><rect x="1201" y="409.5" width="4.5" height="1" fill="#202020" opacity="0.55"/><rect x="1242.5" y="409.5" width="4.5" height="1" fill="#202020" opacity="0.55"/><rect x="1201" y="417.5" width="4.5" height="1" fill="#202020" opacity="0.55"/><rect x="1242.5" y="417.5" width="4.5" height="1" fill="#202020" opacity="0.55"/><rect x="1201" y="425.5" width="4.5" height="1" fill="#202020" opacity="0.55"/><rect x="1242.5" y="425.5" width="4.5" height="1" fill="#202020" opacity="0.55"/><rect x="1201" y="433.5" width="4.5" height="1" fill="#202020" opacity="0.55"/><rect x="1242.5" y="433.5" width="4.5" height="1" fill="#202020" opacity="0.55"/><rect x="1201" y="441.5" width="9" height="1" fill="#202020" opacity="0.55"/><rect x="1238" y="441.5" width="9" height="1" fill="#202020" opacity="0.55"/><rect x="1201" y="449.5" width="4.5" height="1" fill="#202020" opacity="0.55"/><rect x="1242.5" y="449.5" width="4.5" height="1" fill="#202020" opacity="0.55"/><rect x="1201" y="457.5" width="4.5" height="1" fill="#202020" opacity="0.55"/><rect x="1242.5" y="457.5" width="4.5" height="1" fill="#202020" opacity="0.55"/><rect x="1201" y="465.5" width="4.5" height="1" fill="#202020" opacity="0.55"/><rect x="1242.5" y="465.5" width="4.5" height="1" fill="#202020" opacity="0.55"/><rect x="1201" y="473.5" width="4.5" height="1" fill="#202020" opacity="0.55"/><rect x="1242.5" y="473.5" width="4.5" height="1" fill="#202020" opacity="0.55"/><rect x="1201" y="481.5" width="9" height="1" fill="#202020" opacity="0.55"/><rect x="1238" y="481.5" width="9" height="1" fill="#202020" opacity="0.55"/><rect x="1201" y="489.5" width="4.5" height="1" fill="#202020" opacity="0.55"/><rect x="1242.5" y="489.5" width="4.5" height="1" fill="#202020" opacity="0.55"/><rect x="1201" y="497.5" width="4.5" height="1" fill="#202020" opacity="0.55"/><rect x="1242.5" y="497.5" width="4.5" height="1" fill="#202020" opacity="0.55"/><rect x="1201" y="505.5" width="4.5" height="1" fill="#202020" opacity="0.55"/><rect x="1242.5" y="505.5" width="4.5" height="1" fill="#202020" opacity="0.55"/><rect x="1201" y="513.5" width="4.5" height="1" fill="#202020" opacity="0.55"/><rect x="1242.5" y="513.5" width="4.5" height="1" fill="#202020" opacity="0.55"/><rect x="1201" y="521.5" width="9" height="1" fill="#202020" opacity="0.55"/><rect x="1238" y="521.5" width="9" height="1" fill="#202020" opacity="0.55"/><rect x="1201" y="529.5" width="4.5" height="1" fill="#202020" opacity="0.55"/><rect x="1242.5" y="529.5" width="4.5" height="1" fill="#202020" opacity="0.55"/><rect x="1201" y="537.5" width="4.5" height="1" fill="#202020" opacity="0.55"/><rect x="1242.5" y="537.5" width="4.5" height="1" fill="#202020" opacity="0.55"/><rect x="1201" y="545.5" width="4.5" height="1" fill="#202020" opacity="0.55"/><rect x="1242.5" y="545.5" width="4.5" height="1" fill="#202020" opacity="0.55"/><rect x="1201" y="553.5" width="4.5" height="1" fill="#202020" opacity="0.55"/><rect x="1242.5" y="553.5" width="4.5" height="1" fill="#202020" opacity="0.55"/><text x="1224.5" y="449.3" font-family="Liberation Sans" font-size="20.8" fill="#0A0A0A" text-anchor="middle" font-weight="normal" >110</text><text x="1224.5" y="489.3" font-family="Liberation Sans" font-size="20.8" fill="#0A0A0A" text-anchor="middle" font-weight="normal" >120</text><text x="1224.5" y="529.3" font-family="Liberation Sans" font-size="20.8" fill="#0A0A0A" text-anchor="middle" font-weight="normal" >130</text><path d="M1186.5 472.5 L1197.5 482.0 L1186.5 491.5 Z" fill="#E81010"/><path d="M1259.5 472.5 L1248.5 482.0 L1259.5 491.5 Z" fill="#E81010"/><path d="M1173.3 459.7 l7 12 h-14z M1173.3 502.8 l7 -12 h-14z" fill="#F0E800"/><rect x="1172.3" y="469.7" width="2" height="23.100000000000023" fill="#F0E800"/><text x="1309" y="411.8" font-family="Liberation Sans" font-size="15.5" fill="#0A0A0A" text-anchor="end" font-weight="bold" >AC</text><text x="1309" y="437.6" font-family="Liberation Sans" font-size="15.5" fill="#0A0A0A" text-anchor="end" font-weight="bold" >DC</text><text x="1309" y="465.4" font-family="Liberation Sans" font-size="15.5" fill="#0A0A0A" text-anchor="end" font-weight="bold" >GND</text><text x="1309" y="492.4" font-family="Liberation Sans" font-size="15.5" fill="#0A0A0A" text-anchor="end" font-weight="bold" >OFF</text><rect x="1315.5" y="385" width="29" height="123" fill="#B8B8BC" /><rect x="1315.5" y="385" width="2" height="123" fill="#F0F0F0" /><rect x="1317.5" y="387" width="1.5" height="121" fill="#111" /><rect x="1327.2" y="415.8" width="5" height="82.6" fill="#0A0A0A" /><rect x="1327.2" y="498.4" width="6" height="1.5" fill="#F0F0F0" /><rect x="1317.7" y="386.6" width="21.3" height="28.4" fill="#3A3A3A" /><rect x="1317.7" y="386.6" width="19.8" height="26.9" fill="#F4F4F4" /><rect x="1319.2" y="388.1" width="18.3" height="25.4" fill="#B8B8B8" /><rect x="1322.2" y="391.6" width="12.3" height="1.6" fill="#5A5A5A" /><rect x="1322.2" y="396.0" width="12.3" height="1.6" fill="#5A5A5A" /><rect x="1322.2" y="400.40000000000003" width="12.3" height="1.6" fill="#5A5A5A" /><rect x="1322.2" y="404.8" width="12.3" height="1.6" fill="#5A5A5A" /><rect x="1322.2" y="409.20000000000005" width="12.3" height="1.6" fill="#5A5A5A" /><text x="1310" y="533.3" font-family="Liberation Sans" font-size="15.5" fill="#0A0A0A" text-anchor="end" font-weight="bold" >Invert</text><rect x="1315.5" y="513.8" width="29.200000000000045" height="29.200000000000045" fill="#F0F0F0" /><rect x="1317.5" y="515.8" width="27.200000000000045" height="27.200000000000045" fill="#111" /><rect x="1317.5" y="515.8" width="24.200000000000045" height="24.200000000000045" fill="url(#gBtn)" /><text x="1310" y="566.2" font-family="Liberation Sans" font-size="15.5" fill="#0A0A0A" text-anchor="end" font-weight="bold" >A+B</text><rect x="1315.5" y="546" width="29.200000000000045" height="29" fill="#F0F0F0" /><rect x="1317.5" y="548" width="27.200000000000045" height="27" fill="#111" /><rect x="1317.5" y="548" width="24.200000000000045" height="24" fill="url(#gBtn)" /><path d="M1168 745.5 V657.8 A88 88 0 0 1 1344 657.8 V745.5 H1295 V701.7 H1217.5 V745.5 Z" fill="#FFFFFF"/><path d="M1168 745.5 V657.8 A88 88 0 0 1 1344 657.8 V745.5" fill="none" stroke="#606060" stroke-width="0.8"/><path d="M1217.5 745.5 V701.7 M1295 745.5 V701.7" stroke="#404040" stroke-width="0.8"/><line x1="1283.8" y1="614.7" x2="1308.8" y2="577.3" stroke="#A2A2A6" stroke-width="6"/><path d="M1214.3 698.0 L1208.6 703.7 M1201.5 678.9 L1194.1 681.9 M1197.0 656.3 L1189.0 656.3 M1201.5 633.7 L1194.1 630.7 M1214.3 614.6 L1208.6 608.9 M1233.4 601.8 L1230.4 594.4 M1256.0 597.3 L1256.0 589.3 M1278.6 601.8 L1281.6 594.4 M1297.7 614.6 L1303.4 608.9 M1310.5 633.7 L1317.9 630.7 M1315.0 656.3 L1323.0 656.3 M1310.5 678.9 L1317.9 681.9 M1297.7 698.0 L1303.4 703.7" stroke="#202020" stroke-width="1"/><text x="1197" y="715.0999999999999" font-family="Liberation Sans" font-size="14" fill="#2E2E2E" text-anchor="middle" font-weight="normal" >20</text><text x="1180.3" y="691.5" font-family="Liberation Sans" font-size="14" fill="#2E2E2E" text-anchor="middle" font-weight="normal" >10</text><text x="1177.9" y="661.5999999999999" font-family="Liberation Sans" font-size="14" fill="#2E2E2E" text-anchor="middle" font-weight="normal" >5</text><text x="1184.2" y="634.55" font-family="Liberation Sans" font-size="14" fill="#2E2E2E" text-anchor="middle" font-weight="normal" >2</text><text x="1200.4" y="608.1999999999999" font-family="Liberation Sans" font-size="14" fill="#2E2E2E" text-anchor="middle" font-weight="normal" >1</text><text x="1226.4" y="589.4" font-family="Liberation Sans" font-size="14" fill="#2E2E2E" text-anchor="middle" font-weight="normal" >0.5</text><text x="1257" y="583.1999999999999" font-family="Liberation Sans" font-size="14" fill="#2E2E2E" text-anchor="middle" font-weight="normal" >0.2</text><text x="1283" y="589.4" font-family="Liberation Sans" font-size="14" fill="#2E2E2E" text-anchor="middle" font-weight="normal" >0.1</text><text x="1312" y="607.5" font-family="Liberation Sans" font-size="14" fill="#2E2E2E" text-anchor="middle" font-weight="normal" >50</text><text x="1328.9" y="633.5999999999999" font-family="Liberation Sans" font-size="14" fill="#2E2E2E" text-anchor="middle" font-weight="normal" >20</text><text x="1333" y="661.5999999999999" font-family="Liberation Sans" font-size="14" fill="#2E2E2E" text-anchor="middle" font-weight="normal" >10</text><text x="1327.8" y="690.8" font-family="Liberation Sans" font-size="14" fill="#2E2E2E" text-anchor="middle" font-weight="normal" >5</text><text x="1311" y="716.5" font-family="Liberation Sans" font-size="14" fill="#2E2E2E" text-anchor="middle" font-weight="normal" >2</text><circle cx="1256" cy="656.3" r="59.8" fill="url(#gRim)"/><circle cx="1256" cy="656.3" r="57.3" fill="url(#gKnob)"/><circle cx="1256" cy="656.3" r="34" fill="url(#gRing)"/><circle cx="1256" cy="656.3" r="29.5" fill="url(#gInner)"/><path d="M1278.0 667.3 L1266.5 679.8 L1276.5 677.3 Z" fill="#F0F030"/><path d="M1203.0 656.3 L1212.4 644.3 L1212.4 668.3 Z" fill="#F0F030"/><rect x="1222" y="718.7" width="69" height="25.09999999999991" fill="#D8D8D8" /><rect x="1222" y="718.7" width="69" height="2.5" fill="#101010" /><rect x="1222" y="718.7" width="2.5" height="25.09999999999991" fill="#101010" /><rect x="1224.5" y="721.2" width="64" height="20.09999999999991" fill="#FFFFFF" /><text x="1226" y="738.8" font-family="Liberation Sans" font-size="21" fill="#1A1A70" text-anchor="start" font-weight="normal" >5</text><text x="1190.9" y="736.5" font-family="Liberation Sans" font-size="19" fill="#101010" text-anchor="middle" font-weight="normal" >V</text><text x="1320" y="736.5" font-family="Liberation Sans" font-size="19" fill="#101010" text-anchor="middle" font-weight="normal" >mV</text><text x="1445.5" y="363.8" font-family="Liberation Sans" font-size="24.5" fill="#E0288C" text-anchor="middle" font-weight="bold" >Channel C</text><text x="1407.8" y="399.8" font-family="Liberation Sans" font-size="16" fill="#0A0A0A" text-anchor="middle" font-weight="bold" >Position</text><rect x="1371" y="404" width="80" height="161" fill="#F4F4F4" /><rect x="1373.5" y="406.5" width="77.5" height="158.5" fill="#101010" /><rect x="1375" y="408" width="74" height="155" fill="#A2A2A6" /><rect x="1385.3" y="409.5" width="1.5" height="152" fill="#F0F0F0" /><rect x="1446.5" y="409.5" width="1.5" height="152" fill="#F0F0F0" /><rect x="1375" y="561.5" width="74" height="1.5" fill="#F0F0F0" /><rect x="1387" y="410" width="50" height="149.8" fill="url(#gDrumV)" /><rect x="1387" y="410" width="50" height="149.8" fill="url(#gDrumSide)" /><rect x="1387" y="410" width="2" height="149.8" fill="#3A3A3A" /><rect x="1435" y="410" width="2" height="149.8" fill="#3A3A3A" /><rect x="1389" y="409.5" width="4.5" height="1" fill="#202020" opacity="0.55"/><rect x="1430.5" y="409.5" width="4.5" height="1" fill="#202020" opacity="0.55"/><rect x="1389" y="417.5" width="4.5" height="1" fill="#202020" opacity="0.55"/><rect x="1430.5" y="417.5" width="4.5" height="1" fill="#202020" opacity="0.55"/><rect x="1389" y="425.5" width="4.5" height="1" fill="#202020" opacity="0.55"/><rect x="1430.5" y="425.5" width="4.5" height="1" fill="#202020" opacity="0.55"/><rect x="1389" y="433.5" width="4.5" height="1" fill="#202020" opacity="0.55"/><rect x="1430.5" y="433.5" width="4.5" height="1" fill="#202020" opacity="0.55"/><rect x="1389" y="441.5" width="9" height="1" fill="#202020" opacity="0.55"/><rect x="1426" y="441.5" width="9" height="1" fill="#202020" opacity="0.55"/><rect x="1389" y="449.5" width="4.5" height="1" fill="#202020" opacity="0.55"/><rect x="1430.5" y="449.5" width="4.5" height="1" fill="#202020" opacity="0.55"/><rect x="1389" y="457.5" width="4.5" height="1" fill="#202020" opacity="0.55"/><rect x="1430.5" y="457.5" width="4.5" height="1" fill="#202020" opacity="0.55"/><rect x="1389" y="465.5" width="4.5" height="1" fill="#202020" opacity="0.55"/><rect x="1430.5" y="465.5" width="4.5" height="1" fill="#202020" opacity="0.55"/><rect x="1389" y="473.5" width="4.5" height="1" fill="#202020" opacity="0.55"/><rect x="1430.5" y="473.5" width="4.5" height="1" fill="#202020" opacity="0.55"/><rect x="1389" y="481.5" width="9" height="1" fill="#202020" opacity="0.55"/><rect x="1426" y="481.5" width="9" height="1" fill="#202020" opacity="0.55"/><rect x="1389" y="489.5" width="4.5" height="1" fill="#202020" opacity="0.55"/><rect x="1430.5" y="489.5" width="4.5" height="1" fill="#202020" opacity="0.55"/><rect x="1389" y="497.5" width="4.5" height="1" fill="#202020" opacity="0.55"/><rect x="1430.5" y="497.5" width="4.5" height="1" fill="#202020" opacity="0.55"/><rect x="1389" y="505.5" width="4.5" height="1" fill="#202020" opacity="0.55"/><rect x="1430.5" y="505.5" width="4.5" height="1" fill="#202020" opacity="0.55"/><rect x="1389" y="513.5" width="4.5" height="1" fill="#202020" opacity="0.55"/><rect x="1430.5" y="513.5" width="4.5" height="1" fill="#202020" opacity="0.55"/><rect x="1389" y="521.5" width="9" height="1" fill="#202020" opacity="0.55"/><rect x="1426" y="521.5" width="9" height="1" fill="#202020" opacity="0.55"/><rect x="1389" y="529.5" width="4.5" height="1" fill="#202020" opacity="0.55"/><rect x="1430.5" y="529.5" width="4.5" height="1" fill="#202020" opacity="0.55"/><rect x="1389" y="537.5" width="4.5" height="1" fill="#202020" opacity="0.55"/><rect x="1430.5" y="537.5" width="4.5" height="1" fill="#202020" opacity="0.55"/><rect x="1389" y="545.5" width="4.5" height="1" fill="#202020" opacity="0.55"/><rect x="1430.5" y="545.5" width="4.5" height="1" fill="#202020" opacity="0.55"/><rect x="1389" y="553.5" width="4.5" height="1" fill="#202020" opacity="0.55"/><rect x="1430.5" y="553.5" width="4.5" height="1" fill="#202020" opacity="0.55"/><text x="1412.5" y="449.3" font-family="Liberation Sans" font-size="20.8" fill="#0A0A0A" text-anchor="middle" font-weight="normal" >-50</text><text x="1412.5" y="489.3" font-family="Liberation Sans" font-size="20.8" fill="#0A0A0A" text-anchor="middle" font-weight="normal" >-40</text><text x="1412.5" y="529.3" font-family="Liberation Sans" font-size="20.8" fill="#0A0A0A" text-anchor="middle" font-weight="normal" >-30</text><path d="M1374.5 472.5 L1385.5 482.0 L1374.5 491.5 Z" fill="#E81010"/><path d="M1447.5 472.5 L1436.5 482.0 L1447.5 491.5 Z" fill="#E81010"/><path d="M1361.3 459.7 l7 12 h-14z M1361.3 502.8 l7 -12 h-14z" fill="#E0208C"/><rect x="1360.3" y="469.7" width="2" height="23.100000000000023" fill="#E0208C"/><text x="1497" y="411.8" font-family="Liberation Sans" font-size="15.5" fill="#0A0A0A" text-anchor="end" font-weight="bold" >AC</text><text x="1497" y="437.6" font-family="Liberation Sans" font-size="15.5" fill="#0A0A0A" text-anchor="end" font-weight="bold" >DC</text><text x="1497" y="465.4" font-family="Liberation Sans" font-size="15.5" fill="#0A0A0A" text-anchor="end" font-weight="bold" >GND</text><text x="1497" y="492.4" font-family="Liberation Sans" font-size="15.5" fill="#0A0A0A" text-anchor="end" font-weight="bold" >OFF</text><rect x="1503.5" y="385" width="29" height="123" fill="#B8B8BC" /><rect x="1503.5" y="385" width="2" height="123" fill="#F0F0F0" /><rect x="1505.5" y="387" width="1.5" height="121" fill="#111" /><rect x="1515.2" y="415.8" width="5" height="82.6" fill="#0A0A0A" /><rect x="1515.2" y="498.4" width="6" height="1.5" fill="#F0F0F0" /><rect x="1505.7" y="386.6" width="21.3" height="28.4" fill="#3A3A3A" /><rect x="1505.7" y="386.6" width="19.8" height="26.9" fill="#F4F4F4" /><rect x="1507.2" y="388.1" width="18.3" height="25.4" fill="#B8B8B8" /><rect x="1510.2" y="391.6" width="12.3" height="1.6" fill="#5A5A5A" /><rect x="1510.2" y="396.0" width="12.3" height="1.6" fill="#5A5A5A" /><rect x="1510.2" y="400.40000000000003" width="12.3" height="1.6" fill="#5A5A5A" /><rect x="1510.2" y="404.8" width="12.3" height="1.6" fill="#5A5A5A" /><rect x="1510.2" y="409.20000000000005" width="12.3" height="1.6" fill="#5A5A5A" /><text x="1498" y="533.3" font-family="Liberation Sans" font-size="15.5" fill="#0A0A0A" text-anchor="end" font-weight="bold" >Invert</text><rect x="1503.5" y="513.8" width="29.200000000000045" height="29.200000000000045" fill="#F0F0F0" /><rect x="1505.5" y="515.8" width="27.200000000000045" height="27.200000000000045" fill="#111" /><rect x="1505.5" y="515.8" width="24.200000000000045" height="24.200000000000045" fill="url(#gBtn)" /><text x="1498" y="566.2" font-family="Liberation Sans" font-size="15.5" fill="#0A0A0A" text-anchor="end" font-weight="bold" >A+B</text><rect x="1503.5" y="546" width="29.200000000000045" height="29" fill="#F0F0F0" /><rect x="1505.5" y="548" width="27.200000000000045" height="27" fill="#111" /><rect x="1505.5" y="548" width="24.200000000000045" height="24" fill="url(#gBtn)" /><path d="M1356 745.5 V657.8 A88 88 0 0 1 1532 657.8 V745.5 H1483 V701.7 H1405.5 V745.5 Z" fill="#FFFFFF"/><path d="M1356 745.5 V657.8 A88 88 0 0 1 1532 657.8 V745.5" fill="none" stroke="#606060" stroke-width="0.8"/><path d="M1405.5 745.5 V701.7 M1483 745.5 V701.7" stroke="#404040" stroke-width="0.8"/><line x1="1471.8" y1="614.7" x2="1496.8" y2="577.3" stroke="#A2A2A6" stroke-width="6"/><path d="M1402.3 698.0 L1396.6 703.7 M1389.5 678.9 L1382.1 681.9 M1385.0 656.3 L1377.0 656.3 M1389.5 633.7 L1382.1 630.7 M1402.3 614.6 L1396.6 608.9 M1421.4 601.8 L1418.4 594.4 M1444.0 597.3 L1444.0 589.3 M1466.6 601.8 L1469.6 594.4 M1485.7 614.6 L1491.4 608.9 M1498.5 633.7 L1505.9 630.7 M1503.0 656.3 L1511.0 656.3 M1498.5 678.9 L1505.9 681.9 M1485.7 698.0 L1491.4 703.7" stroke="#202020" stroke-width="1"/><text x="1385" y="715.0999999999999" font-family="Liberation Sans" font-size="14" fill="#2E2E2E" text-anchor="middle" font-weight="normal" >20</text><text x="1368.3" y="691.5" font-family="Liberation Sans" font-size="14" fill="#2E2E2E" text-anchor="middle" font-weight="normal" >10</text><text x="1365.9" y="661.5999999999999" font-family="Liberation Sans" font-size="14" fill="#2E2E2E" text-anchor="middle" font-weight="normal" >5</text><text x="1372.2" y="634.55" font-family="Liberation Sans" font-size="14" fill="#2E2E2E" text-anchor="middle" font-weight="normal" >2</text><text x="1388.4" y="608.1999999999999" font-family="Liberation Sans" font-size="14" fill="#2E2E2E" text-anchor="middle" font-weight="normal" >1</text><text x="1414.4" y="589.4" font-family="Liberation Sans" font-size="14" fill="#2E2E2E" text-anchor="middle" font-weight="normal" >0.5</text><text x="1445" y="583.1999999999999" font-family="Liberation Sans" font-size="14" fill="#2E2E2E" text-anchor="middle" font-weight="normal" >0.2</text><text x="1471" y="589.4" font-family="Liberation Sans" font-size="14" fill="#2E2E2E" text-anchor="middle" font-weight="normal" >0.1</text><text x="1500" y="607.5" font-family="Liberation Sans" font-size="14" fill="#2E2E2E" text-anchor="middle" font-weight="normal" >50</text><text x="1516.9" y="633.5999999999999" font-family="Liberation Sans" font-size="14" fill="#2E2E2E" text-anchor="middle" font-weight="normal" >20</text><text x="1521" y="661.5999999999999" font-family="Liberation Sans" font-size="14" fill="#2E2E2E" text-anchor="middle" font-weight="normal" >10</text><text x="1515.8" y="690.8" font-family="Liberation Sans" font-size="14" fill="#2E2E2E" text-anchor="middle" font-weight="normal" >5</text><text x="1499" y="716.5" font-family="Liberation Sans" font-size="14" fill="#2E2E2E" text-anchor="middle" font-weight="normal" >2</text><circle cx="1444" cy="656.3" r="59.8" fill="url(#gRim)"/><circle cx="1444" cy="656.3" r="57.3" fill="url(#gKnob)"/><circle cx="1444" cy="656.3" r="34" fill="url(#gRing)"/><circle cx="1444" cy="656.3" r="29.5" fill="url(#gInner)"/><path d="M1466.0 667.3 L1454.5 679.8 L1464.5 677.3 Z" fill="#E0288C"/><path d="M1391.0 656.3 L1400.4 644.3 L1400.4 668.3 Z" fill="#E0288C"/><rect x="1410" y="718.7" width="69" height="25.09999999999991" fill="#D8D8D8" /><rect x="1410" y="718.7" width="69" height="2.5" fill="#101010" /><rect x="1410" y="718.7" width="2.5" height="25.09999999999991" fill="#101010" /><rect x="1412.5" y="721.2" width="64" height="20.09999999999991" fill="#FFFFFF" /><text x="1414" y="738.8" font-family="Liberation Sans" font-size="21" fill="#1A1A70" text-anchor="start" font-weight="normal" >5</text><text x="1378.9" y="736.5" font-family="Liberation Sans" font-size="19" fill="#101010" text-anchor="middle" font-weight="normal" >V</text><text x="1508" y="736.5" font-family="Liberation Sans" font-size="19" fill="#101010" text-anchor="middle" font-weight="normal" >mV</text><text x="1257.5" y="787.8" font-family="Liberation Sans" font-size="24.5" fill="#2C9CE0" text-anchor="middle" font-weight="bold" >Channel B</text><text x="1219.8" y="823.8" font-family="Liberation Sans" font-size="16" fill="#0A0A0A" text-anchor="middle" font-weight="bold" >Position</text><rect x="1183" y="828" width="80" height="161" fill="#F4F4F4" /><rect x="1185.5" y="830.5" width="77.5" height="158.5" fill="#101010" /><rect x="1187" y="832" width="74" height="155" fill="#A2A2A6" /><rect x="1197.3" y="833.5" width="1.5" height="152" fill="#F0F0F0" /><rect x="1258.5" y="833.5" width="1.5" height="152" fill="#F0F0F0" /><rect x="1187" y="985.5" width="74" height="1.5" fill="#F0F0F0" /><rect x="1199" y="834" width="50" height="149.8" fill="url(#gDrumV)" /><rect x="1199" y="834" width="50" height="149.8" fill="url(#gDrumSide)" /><rect x="1199" y="834" width="2" height="149.8" fill="#3A3A3A" /><rect x="1247" y="834" width="2" height="149.8" fill="#3A3A3A" /><rect x="1201" y="833.5" width="4.5" height="1" fill="#202020" opacity="0.55"/><rect x="1242.5" y="833.5" width="4.5" height="1" fill="#202020" opacity="0.55"/><rect x="1201" y="841.5" width="4.5" height="1" fill="#202020" opacity="0.55"/><rect x="1242.5" y="841.5" width="4.5" height="1" fill="#202020" opacity="0.55"/><rect x="1201" y="849.5" width="4.5" height="1" fill="#202020" opacity="0.55"/><rect x="1242.5" y="849.5" width="4.5" height="1" fill="#202020" opacity="0.55"/><rect x="1201" y="857.5" width="4.5" height="1" fill="#202020" opacity="0.55"/><rect x="1242.5" y="857.5" width="4.5" height="1" fill="#202020" opacity="0.55"/><rect x="1201" y="865.5" width="9" height="1" fill="#202020" opacity="0.55"/><rect x="1238" y="865.5" width="9" height="1" fill="#202020" opacity="0.55"/><rect x="1201" y="873.5" width="4.5" height="1" fill="#202020" opacity="0.55"/><rect x="1242.5" y="873.5" width="4.5" height="1" fill="#202020" opacity="0.55"/><rect x="1201" y="881.5" width="4.5" height="1" fill="#202020" opacity="0.55"/><rect x="1242.5" y="881.5" width="4.5" height="1" fill="#202020" opacity="0.55"/><rect x="1201" y="889.5" width="4.5" height="1" fill="#202020" opacity="0.55"/><rect x="1242.5" y="889.5" width="4.5" height="1" fill="#202020" opacity="0.55"/><rect x="1201" y="897.5" width="4.5" height="1" fill="#202020" opacity="0.55"/><rect x="1242.5" y="897.5" width="4.5" height="1" fill="#202020" opacity="0.55"/><rect x="1201" y="905.5" width="9" height="1" fill="#202020" opacity="0.55"/><rect x="1238" y="905.5" width="9" height="1" fill="#202020" opacity="0.55"/><rect x="1201" y="913.5" width="4.5" height="1" fill="#202020" opacity="0.55"/><rect x="1242.5" y="913.5" width="4.5" height="1" fill="#202020" opacity="0.55"/><rect x="1201" y="921.5" width="4.5" height="1" fill="#202020" opacity="0.55"/><rect x="1242.5" y="921.5" width="4.5" height="1" fill="#202020" opacity="0.55"/><rect x="1201" y="929.5" width="4.5" height="1" fill="#202020" opacity="0.55"/><rect x="1242.5" y="929.5" width="4.5" height="1" fill="#202020" opacity="0.55"/><rect x="1201" y="937.5" width="4.5" height="1" fill="#202020" opacity="0.55"/><rect x="1242.5" y="937.5" width="4.5" height="1" fill="#202020" opacity="0.55"/><rect x="1201" y="945.5" width="9" height="1" fill="#202020" opacity="0.55"/><rect x="1238" y="945.5" width="9" height="1" fill="#202020" opacity="0.55"/><rect x="1201" y="953.5" width="4.5" height="1" fill="#202020" opacity="0.55"/><rect x="1242.5" y="953.5" width="4.5" height="1" fill="#202020" opacity="0.55"/><rect x="1201" y="961.5" width="4.5" height="1" fill="#202020" opacity="0.55"/><rect x="1242.5" y="961.5" width="4.5" height="1" fill="#202020" opacity="0.55"/><rect x="1201" y="969.5" width="4.5" height="1" fill="#202020" opacity="0.55"/><rect x="1242.5" y="969.5" width="4.5" height="1" fill="#202020" opacity="0.55"/><rect x="1201" y="977.5" width="4.5" height="1" fill="#202020" opacity="0.55"/><rect x="1242.5" y="977.5" width="4.5" height="1" fill="#202020" opacity="0.55"/><text x="1224.5" y="873.3" font-family="Liberation Sans" font-size="20.8" fill="#0A0A0A" text-anchor="middle" font-weight="normal" >30</text><text x="1224.5" y="913.3" font-family="Liberation Sans" font-size="20.8" fill="#0A0A0A" text-anchor="middle" font-weight="normal" >40</text><text x="1224.5" y="953.3" font-family="Liberation Sans" font-size="20.8" fill="#0A0A0A" text-anchor="middle" font-weight="normal" >50</text><path d="M1186.5 896.5 L1197.5 906.0 L1186.5 915.5 Z" fill="#E81010"/><path d="M1259.5 896.5 L1248.5 906.0 L1259.5 915.5 Z" fill="#E81010"/><path d="M1173.3 883.7 l7 12 h-14z M1173.3 926.8 l7 -12 h-14z" fill="#2C9CE0"/><rect x="1172.3" y="893.7" width="2" height="23.09999999999991" fill="#2C9CE0"/><text x="1309" y="835.8" font-family="Liberation Sans" font-size="15.5" fill="#0A0A0A" text-anchor="end" font-weight="bold" >AC</text><text x="1309" y="861.6" font-family="Liberation Sans" font-size="15.5" fill="#0A0A0A" text-anchor="end" font-weight="bold" >DC</text><text x="1309" y="889.4" font-family="Liberation Sans" font-size="15.5" fill="#0A0A0A" text-anchor="end" font-weight="bold" >GND</text><text x="1309" y="916.4" font-family="Liberation Sans" font-size="15.5" fill="#0A0A0A" text-anchor="end" font-weight="bold" >OFF</text><rect x="1315.5" y="809" width="29" height="123" fill="#B8B8BC" /><rect x="1315.5" y="809" width="2" height="123" fill="#F0F0F0" /><rect x="1317.5" y="811" width="1.5" height="121" fill="#111" /><rect x="1327.2" y="839.8" width="5" height="82.6" fill="#0A0A0A" /><rect x="1327.2" y="922.4" width="6" height="1.5" fill="#F0F0F0" /><rect x="1317.7" y="810.6" width="21.3" height="28.4" fill="#3A3A3A" /><rect x="1317.7" y="810.6" width="19.8" height="26.9" fill="#F4F4F4" /><rect x="1319.2" y="812.1" width="18.3" height="25.4" fill="#B8B8B8" /><rect x="1322.2" y="815.6" width="12.3" height="1.6" fill="#5A5A5A" /><rect x="1322.2" y="820.0" width="12.3" height="1.6" fill="#5A5A5A" /><rect x="1322.2" y="824.4" width="12.3" height="1.6" fill="#5A5A5A" /><rect x="1322.2" y="828.8000000000001" width="12.3" height="1.6" fill="#5A5A5A" /><rect x="1322.2" y="833.2" width="12.3" height="1.6" fill="#5A5A5A" /><text x="1310" y="957.3" font-family="Liberation Sans" font-size="15.5" fill="#0A0A0A" text-anchor="end" font-weight="bold" >Invert</text><rect x="1315.5" y="937.8" width="29.200000000000045" height="29.200000000000045" fill="#F0F0F0" /><rect x="1317.5" y="939.8" width="27.200000000000045" height="27.200000000000045" fill="#111" /><rect x="1317.5" y="939.8" width="24.200000000000045" height="24.200000000000045" fill="url(#gBtn)" /><text x="1310" y="990.2" font-family="Liberation Sans" font-size="15.5" fill="#0A0A0A" text-anchor="end" font-weight="bold" >A+B</text><path d="M1168 1169.5 V1081.8 A88 88 0 0 1 1344 1081.8 V1169.5 H1295 V1125.7 H1217.5 V1169.5 Z" fill="#FFFFFF"/><path d="M1168 1169.5 V1081.8 A88 88 0 0 1 1344 1081.8 V1169.5" fill="none" stroke="#606060" stroke-width="0.8"/><path d="M1217.5 1169.5 V1125.7 M1295 1169.5 V1125.7" stroke="#404040" stroke-width="0.8"/><line x1="1283.8" y1="1038.7" x2="1308.8" y2="1001.3" stroke="#A2A2A6" stroke-width="6"/><path d="M1214.3 1122.0 L1208.6 1127.7 M1201.5 1102.9 L1194.1 1105.9 M1197.0 1080.3 L1189.0 1080.3 M1201.5 1057.7 L1194.1 1054.7 M1214.3 1038.6 L1208.6 1032.9 M1233.4 1025.8 L1230.4 1018.4 M1256.0 1021.3 L1256.0 1013.3 M1278.6 1025.8 L1281.6 1018.4 M1297.7 1038.6 L1303.4 1032.9 M1310.5 1057.7 L1317.9 1054.7 M1315.0 1080.3 L1323.0 1080.3 M1310.5 1102.9 L1317.9 1105.9 M1297.7 1122.0 L1303.4 1127.7" stroke="#202020" stroke-width="1"/><text x="1197" y="1139.1" font-family="Liberation Sans" font-size="14" fill="#2E2E2E" text-anchor="middle" font-weight="normal" >20</text><text x="1180.3" y="1115.5" font-family="Liberation Sans" font-size="14" fill="#2E2E2E" text-anchor="middle" font-weight="normal" >10</text><text x="1177.9" y="1085.6" font-family="Liberation Sans" font-size="14" fill="#2E2E2E" text-anchor="middle" font-weight="normal" >5</text><text x="1184.2" y="1058.55" font-family="Liberation Sans" font-size="14" fill="#2E2E2E" text-anchor="middle" font-weight="normal" >2</text><text x="1200.4" y="1032.2" font-family="Liberation Sans" font-size="14" fill="#2E2E2E" text-anchor="middle" font-weight="normal" >1</text><text x="1226.4" y="1013.4" font-family="Liberation Sans" font-size="14" fill="#2E2E2E" text-anchor="middle" font-weight="normal" >0.5</text><text x="1257" y="1007.1999999999999" font-family="Liberation Sans" font-size="14" fill="#2E2E2E" text-anchor="middle" font-weight="normal" >0.2</text><text x="1283" y="1013.4" font-family="Liberation Sans" font-size="14" fill="#2E2E2E" text-anchor="middle" font-weight="normal" >0.1</text><text x="1312" y="1031.5" font-family="Liberation Sans" font-size="14" fill="#2E2E2E" text-anchor="middle" font-weight="normal" >50</text><text x="1328.9" y="1057.6" font-family="Liberation Sans" font-size="14" fill="#2E2E2E" text-anchor="middle" font-weight="normal" >20</text><text x="1333" y="1085.6" font-family="Liberation Sans" font-size="14" fill="#2E2E2E" text-anchor="middle" font-weight="normal" >10</text><text x="1327.8" y="1114.8" font-family="Liberation Sans" font-size="14" fill="#2E2E2E" text-anchor="middle" font-weight="normal" >5</text><text x="1311" y="1140.5" font-family="Liberation Sans" font-size="14" fill="#2E2E2E" text-anchor="middle" font-weight="normal" >2</text><circle cx="1256" cy="1080.3" r="59.8" fill="url(#gRim)"/><circle cx="1256" cy="1080.3" r="57.3" fill="url(#gKnob)"/><circle cx="1256" cy="1080.3" r="34" fill="url(#gRing)"/><circle cx="1256" cy="1080.3" r="29.5" fill="url(#gInner)"/><path d="M1278.0 1091.3 L1266.5 1103.8 L1276.5 1101.3 Z" fill="#2C9CE0"/><path d="M1203.0 1080.3 L1212.4 1068.3 L1212.4 1092.3 Z" fill="#2C9CE0"/><rect x="1222" y="1142.7" width="69" height="25.09999999999991" fill="#D8D8D8" /><rect x="1222" y="1142.7" width="69" height="2.5" fill="#101010" /><rect x="1222" y="1142.7" width="2.5" height="25.09999999999991" fill="#101010" /><rect x="1224.5" y="1145.2" width="64" height="20.09999999999991" fill="#FFFFFF" /><text x="1226" y="1162.8" font-family="Liberation Sans" font-size="21" fill="#1A1A70" text-anchor="start" font-weight="normal" >5</text><text x="1190.9" y="1160.5" font-family="Liberation Sans" font-size="19" fill="#101010" text-anchor="middle" font-weight="normal" >V</text><text x="1320" y="1160.5" font-family="Liberation Sans" font-size="19" fill="#101010" text-anchor="middle" font-weight="normal" >mV</text><text x="1445.5" y="787.8" font-family="Liberation Sans" font-size="24.5" fill="#18904A" text-anchor="middle" font-weight="bold" >Channel D</text><text x="1407.8" y="823.8" font-family="Liberation Sans" font-size="16" fill="#0A0A0A" text-anchor="middle" font-weight="bold" >Position</text><rect x="1371" y="828" width="80" height="161" fill="#F4F4F4" /><rect x="1373.5" y="830.5" width="77.5" height="158.5" fill="#101010" /><rect x="1375" y="832" width="74" height="155" fill="#A2A2A6" /><rect x="1385.3" y="833.5" width="1.5" height="152" fill="#F0F0F0" /><rect x="1446.5" y="833.5" width="1.5" height="152" fill="#F0F0F0" /><rect x="1375" y="985.5" width="74" height="1.5" fill="#F0F0F0" /><rect x="1387" y="834" width="50" height="149.8" fill="url(#gDrumV)" /><rect x="1387" y="834" width="50" height="149.8" fill="url(#gDrumSide)" /><rect x="1387" y="834" width="2" height="149.8" fill="#3A3A3A" /><rect x="1435" y="834" width="2" height="149.8" fill="#3A3A3A" /><rect x="1389" y="833.5" width="4.5" height="1" fill="#202020" opacity="0.55"/><rect x="1430.5" y="833.5" width="4.5" height="1" fill="#202020" opacity="0.55"/><rect x="1389" y="841.5" width="4.5" height="1" fill="#202020" opacity="0.55"/><rect x="1430.5" y="841.5" width="4.5" height="1" fill="#202020" opacity="0.55"/><rect x="1389" y="849.5" width="4.5" height="1" fill="#202020" opacity="0.55"/><rect x="1430.5" y="849.5" width="4.5" height="1" fill="#202020" opacity="0.55"/><rect x="1389" y="857.5" width="4.5" height="1" fill="#202020" opacity="0.55"/><rect x="1430.5" y="857.5" width="4.5" height="1" fill="#202020" opacity="0.55"/><rect x="1389" y="865.5" width="9" height="1" fill="#202020" opacity="0.55"/><rect x="1426" y="865.5" width="9" height="1" fill="#202020" opacity="0.55"/><rect x="1389" y="873.5" width="4.5" height="1" fill="#202020" opacity="0.55"/><rect x="1430.5" y="873.5" width="4.5" height="1" fill="#202020" opacity="0.55"/><rect x="1389" y="881.5" width="4.5" height="1" fill="#202020" opacity="0.55"/><rect x="1430.5" y="881.5" width="4.5" height="1" fill="#202020" opacity="0.55"/><rect x="1389" y="889.5" width="4.5" height="1" fill="#202020" opacity="0.55"/><rect x="1430.5" y="889.5" width="4.5" height="1" fill="#202020" opacity="0.55"/><rect x="1389" y="897.5" width="4.5" height="1" fill="#202020" opacity="0.55"/><rect x="1430.5" y="897.5" width="4.5" height="1" fill="#202020" opacity="0.55"/><rect x="1389" y="905.5" width="9" height="1" fill="#202020" opacity="0.55"/><rect x="1426" y="905.5" width="9" height="1" fill="#202020" opacity="0.55"/><rect x="1389" y="913.5" width="4.5" height="1" fill="#202020" opacity="0.55"/><rect x="1430.5" y="913.5" width="4.5" height="1" fill="#202020" opacity="0.55"/><rect x="1389" y="921.5" width="4.5" height="1" fill="#202020" opacity="0.55"/><rect x="1430.5" y="921.5" width="4.5" height="1" fill="#202020" opacity="0.55"/><rect x="1389" y="929.5" width="4.5" height="1" fill="#202020" opacity="0.55"/><rect x="1430.5" y="929.5" width="4.5" height="1" fill="#202020" opacity="0.55"/><rect x="1389" y="937.5" width="4.5" height="1" fill="#202020" opacity="0.55"/><rect x="1430.5" y="937.5" width="4.5" height="1" fill="#202020" opacity="0.55"/><rect x="1389" y="945.5" width="9" height="1" fill="#202020" opacity="0.55"/><rect x="1426" y="945.5" width="9" height="1" fill="#202020" opacity="0.55"/><rect x="1389" y="953.5" width="4.5" height="1" fill="#202020" opacity="0.55"/><rect x="1430.5" y="953.5" width="4.5" height="1" fill="#202020" opacity="0.55"/><rect x="1389" y="961.5" width="4.5" height="1" fill="#202020" opacity="0.55"/><rect x="1430.5" y="961.5" width="4.5" height="1" fill="#202020" opacity="0.55"/><rect x="1389" y="969.5" width="4.5" height="1" fill="#202020" opacity="0.55"/><rect x="1430.5" y="969.5" width="4.5" height="1" fill="#202020" opacity="0.55"/><rect x="1389" y="977.5" width="4.5" height="1" fill="#202020" opacity="0.55"/><rect x="1430.5" y="977.5" width="4.5" height="1" fill="#202020" opacity="0.55"/><text x="1412.5" y="873.3" font-family="Liberation Sans" font-size="20.8" fill="#0A0A0A" text-anchor="middle" font-weight="normal" >-130</text><text x="1412.5" y="913.3" font-family="Liberation Sans" font-size="20.8" fill="#0A0A0A" text-anchor="middle" font-weight="normal" >-120</text><text x="1412.5" y="953.3" font-family="Liberation Sans" font-size="20.8" fill="#0A0A0A" text-anchor="middle" font-weight="normal" >-110</text><path d="M1374.5 896.5 L1385.5 906.0 L1374.5 915.5 Z" fill="#E81010"/><path d="M1447.5 896.5 L1436.5 906.0 L1447.5 915.5 Z" fill="#E81010"/><path d="M1361.3 883.7 l7 12 h-14z M1361.3 926.8 l7 -12 h-14z" fill="#18904A"/><rect x="1360.3" y="893.7" width="2" height="23.09999999999991" fill="#18904A"/><text x="1497" y="835.8" font-family="Liberation Sans" font-size="15.5" fill="#0A0A0A" text-anchor="end" font-weight="bold" >AC</text><text x="1497" y="861.6" font-family="Liberation Sans" font-size="15.5" fill="#0A0A0A" text-anchor="end" font-weight="bold" >DC</text><text x="1497" y="889.4" font-family="Liberation Sans" font-size="15.5" fill="#0A0A0A" text-anchor="end" font-weight="bold" >GND</text><text x="1497" y="916.4" font-family="Liberation Sans" font-size="15.5" fill="#0A0A0A" text-anchor="end" font-weight="bold" >OFF</text><rect x="1503.5" y="809" width="29" height="123" fill="#B8B8BC" /><rect x="1503.5" y="809" width="2" height="123" fill="#F0F0F0" /><rect x="1505.5" y="811" width="1.5" height="121" fill="#111" /><rect x="1515.2" y="839.8" width="5" height="82.6" fill="#0A0A0A" /><rect x="1515.2" y="922.4" width="6" height="1.5" fill="#F0F0F0" /><rect x="1505.7" y="810.6" width="21.3" height="28.4" fill="#3A3A3A" /><rect x="1505.7" y="810.6" width="19.8" height="26.9" fill="#F4F4F4" /><rect x="1507.2" y="812.1" width="18.3" height="25.4" fill="#B8B8B8" /><rect x="1510.2" y="815.6" width="12.3" height="1.6" fill="#5A5A5A" /><rect x="1510.2" y="820.0" width="12.3" height="1.6" fill="#5A5A5A" /><rect x="1510.2" y="824.4" width="12.3" height="1.6" fill="#5A5A5A" /><rect x="1510.2" y="828.8000000000001" width="12.3" height="1.6" fill="#5A5A5A" /><rect x="1510.2" y="833.2" width="12.3" height="1.6" fill="#5A5A5A" /><text x="1498" y="957.3" font-family="Liberation Sans" font-size="15.5" fill="#0A0A0A" text-anchor="end" font-weight="bold" >Invert</text><rect x="1503.5" y="937.8" width="29.200000000000045" height="29.200000000000045" fill="#F0F0F0" /><rect x="1505.5" y="939.8" width="27.200000000000045" height="27.200000000000045" fill="#111" /><rect x="1505.5" y="939.8" width="24.200000000000045" height="24.200000000000045" fill="url(#gBtn)" /><text x="1498" y="990.2" font-family="Liberation Sans" font-size="15.5" fill="#0A0A0A" text-anchor="end" font-weight="bold" >A+B</text><path d="M1356 1169.5 V1081.8 A88 88 0 0 1 1532 1081.8 V1169.5 H1483 V1125.7 H1405.5 V1169.5 Z" fill="#FFFFFF"/><path d="M1356 1169.5 V1081.8 A88 88 0 0 1 1532 1081.8 V1169.5" fill="none" stroke="#606060" stroke-width="0.8"/><path d="M1405.5 1169.5 V1125.7 M1483 1169.5 V1125.7" stroke="#404040" stroke-width="0.8"/><line x1="1471.8" y1="1038.7" x2="1496.8" y2="1001.3" stroke="#A2A2A6" stroke-width="6"/><path d="M1402.3 1122.0 L1396.6 1127.7 M1389.5 1102.9 L1382.1 1105.9 M1385.0 1080.3 L1377.0 1080.3 M1389.5 1057.7 L1382.1 1054.7 M1402.3 1038.6 L1396.6 1032.9 M1421.4 1025.8 L1418.4 1018.4 M1444.0 1021.3 L1444.0 1013.3 M1466.6 1025.8 L1469.6 1018.4 M1485.7 1038.6 L1491.4 1032.9 M1498.5 1057.7 L1505.9 1054.7 M1503.0 1080.3 L1511.0 1080.3 M1498.5 1102.9 L1505.9 1105.9 M1485.7 1122.0 L1491.4 1127.7" stroke="#202020" stroke-width="1"/><text x="1385" y="1139.1" font-family="Liberation Sans" font-size="14" fill="#2E2E2E" text-anchor="middle" font-weight="normal" >20</text><text x="1368.3" y="1115.5" font-family="Liberation Sans" font-size="14" fill="#2E2E2E" text-anchor="middle" font-weight="normal" >10</text><text x="1365.9" y="1085.6" font-family="Liberation Sans" font-size="14" fill="#2E2E2E" text-anchor="middle" font-weight="normal" >5</text><text x="1372.2" y="1058.55" font-family="Liberation Sans" font-size="14" fill="#2E2E2E" text-anchor="middle" font-weight="normal" >2</text><text x="1388.4" y="1032.2" font-family="Liberation Sans" font-size="14" fill="#2E2E2E" text-anchor="middle" font-weight="normal" >1</text><text x="1414.4" y="1013.4" font-family="Liberation Sans" font-size="14" fill="#2E2E2E" text-anchor="middle" font-weight="normal" >0.5</text><text x="1445" y="1007.1999999999999" font-family="Liberation Sans" font-size="14" fill="#2E2E2E" text-anchor="middle" font-weight="normal" >0.2</text><text x="1471" y="1013.4" font-family="Liberation Sans" font-size="14" fill="#2E2E2E" text-anchor="middle" font-weight="normal" >0.1</text><text x="1500" y="1031.5" font-family="Liberation Sans" font-size="14" fill="#2E2E2E" text-anchor="middle" font-weight="normal" >50</text><text x="1516.9" y="1057.6" font-family="Liberation Sans" font-size="14" fill="#2E2E2E" text-anchor="middle" font-weight="normal" >20</text><text x="1521" y="1085.6" font-family="Liberation Sans" font-size="14" fill="#2E2E2E" text-anchor="middle" font-weight="normal" >10</text><text x="1515.8" y="1114.8" font-family="Liberation Sans" font-size="14" fill="#2E2E2E" text-anchor="middle" font-weight="normal" >5</text><text x="1499" y="1140.5" font-family="Liberation Sans" font-size="14" fill="#2E2E2E" text-anchor="middle" font-weight="normal" >2</text><circle cx="1444" cy="1080.3" r="59.8" fill="url(#gRim)"/><circle cx="1444" cy="1080.3" r="57.3" fill="url(#gKnob)"/><circle cx="1444" cy="1080.3" r="34" fill="url(#gRing)"/><circle cx="1444" cy="1080.3" r="29.5" fill="url(#gInner)"/><path d="M1466.0 1091.3 L1454.5 1103.8 L1464.5 1101.3 Z" fill="#18904A"/><path d="M1391.0 1080.3 L1400.4 1068.3 L1400.4 1092.3 Z" fill="#18904A"/><rect x="1410" y="1142.7" width="69" height="25.09999999999991" fill="#D8D8D8" /><rect x="1410" y="1142.7" width="69" height="2.5" fill="#101010" /><rect x="1410" y="1142.7" width="2.5" height="25.09999999999991" fill="#101010" /><rect x="1412.5" y="1145.2" width="64" height="20.09999999999991" fill="#FFFFFF" /><text x="1414" y="1162.8" font-family="Liberation Sans" font-size="21" fill="#1A1A70" text-anchor="start" font-weight="normal" >5</text><text x="1378.9" y="1160.5" font-family="Liberation Sans" font-size="19" fill="#101010" text-anchor="middle" font-weight="normal" >V</text><text x="1508" y="1160.5" font-family="Liberation Sans" font-size="19" fill="#101010" text-anchor="middle" font-weight="normal" >mV</text><text x="1062.3" y="363.8" font-family="Liberation Sans" font-size="24.5" fill="#F0909C" text-anchor="middle" font-weight="bold" >Trigger</text><text x="1034.6" y="398.6" font-family="Liberation Sans" font-size="16" fill="#0A0A0A" text-anchor="middle" font-weight="bold" >Level</text><rect x="995" y="404" width="80" height="161" fill="#F4F4F4" /><rect x="997.5" y="406.5" width="77.5" height="158.5" fill="#101010" /><rect x="999" y="408" width="74" height="155" fill="#A2A2A6" /><rect x="1009.3" y="409.5" width="1.5" height="152" fill="#F0F0F0" /><rect x="1070.5" y="409.5" width="1.5" height="152" fill="#F0F0F0" /><rect x="999" y="561.5" width="74" height="1.5" fill="#F0F0F0" /><rect x="1011" y="410" width="50" height="149.8" fill="url(#gDrumV)" /><rect x="1011" y="410" width="50" height="149.8" fill="url(#gDrumSide)" /><rect x="1011" y="410" width="2" height="149.8" fill="#3A3A3A" /><rect x="1059" y="410" width="2" height="149.8" fill="#3A3A3A" /><rect x="1013" y="409.5" width="4.5" height="1" fill="#202020" opacity="0.55"/><rect x="1054.5" y="409.5" width="4.5" height="1" fill="#202020" opacity="0.55"/><rect x="1013" y="417.5" width="4.5" height="1" fill="#202020" opacity="0.55"/><rect x="1054.5" y="417.5" width="4.5" height="1" fill="#202020" opacity="0.55"/><rect x="1013" y="425.5" width="4.5" height="1" fill="#202020" opacity="0.55"/><rect x="1054.5" y="425.5" width="4.5" height="1" fill="#202020" opacity="0.55"/><rect x="1013" y="433.5" width="4.5" height="1" fill="#202020" opacity="0.55"/><rect x="1054.5" y="433.5" width="4.5" height="1" fill="#202020" opacity="0.55"/><rect x="1013" y="441.5" width="9" height="1" fill="#202020" opacity="0.55"/><rect x="1050" y="441.5" width="9" height="1" fill="#202020" opacity="0.55"/><rect x="1013" y="449.5" width="4.5" height="1" fill="#202020" opacity="0.55"/><rect x="1054.5" y="449.5" width="4.5" height="1" fill="#202020" opacity="0.55"/><rect x="1013" y="457.5" width="4.5" height="1" fill="#202020" opacity="0.55"/><rect x="1054.5" y="457.5" width="4.5" height="1" fill="#202020" opacity="0.55"/><rect x="1013" y="465.5" width="4.5" height="1" fill="#202020" opacity="0.55"/><rect x="1054.5" y="465.5" width="4.5" height="1" fill="#202020" opacity="0.55"/><rect x="1013" y="473.5" width="4.5" height="1" fill="#202020" opacity="0.55"/><rect x="1054.5" y="473.5" width="4.5" height="1" fill="#202020" opacity="0.55"/><rect x="1013" y="481.5" width="9" height="1" fill="#202020" opacity="0.55"/><rect x="1050" y="481.5" width="9" height="1" fill="#202020" opacity="0.55"/><rect x="1013" y="489.5" width="4.5" height="1" fill="#202020" opacity="0.55"/><rect x="1054.5" y="489.5" width="4.5" height="1" fill="#202020" opacity="0.55"/><rect x="1013" y="497.5" width="4.5" height="1" fill="#202020" opacity="0.55"/><rect x="1054.5" y="497.5" width="4.5" height="1" fill="#202020" opacity="0.55"/><rect x="1013" y="505.5" width="4.5" height="1" fill="#202020" opacity="0.55"/><rect x="1054.5" y="505.5" width="4.5" height="1" fill="#202020" opacity="0.55"/><rect x="1013" y="513.5" width="4.5" height="1" fill="#202020" opacity="0.55"/><rect x="1054.5" y="513.5" width="4.5" height="1" fill="#202020" opacity="0.55"/><rect x="1013" y="521.5" width="9" height="1" fill="#202020" opacity="0.55"/><rect x="1050" y="521.5" width="9" height="1" fill="#202020" opacity="0.55"/><rect x="1013" y="529.5" width="4.5" height="1" fill="#202020" opacity="0.55"/><rect x="1054.5" y="529.5" width="4.5" height="1" fill="#202020" opacity="0.55"/><rect x="1013" y="537.5" width="4.5" height="1" fill="#202020" opacity="0.55"/><rect x="1054.5" y="537.5" width="4.5" height="1" fill="#202020" opacity="0.55"/><rect x="1013" y="545.5" width="4.5" height="1" fill="#202020" opacity="0.55"/><rect x="1054.5" y="545.5" width="4.5" height="1" fill="#202020" opacity="0.55"/><rect x="1013" y="553.5" width="4.5" height="1" fill="#202020" opacity="0.55"/><rect x="1054.5" y="553.5" width="4.5" height="1" fill="#202020" opacity="0.55"/><text x="1036.5" y="449.3" font-family="Liberation Sans" font-size="20.8" fill="#0A0A0A" text-anchor="middle" font-weight="normal" >-10</text><text x="1036.5" y="489.3" font-family="Liberation Sans" font-size="20.8" fill="#0A0A0A" text-anchor="middle" font-weight="normal" >0</text><text x="1036.5" y="529.3" font-family="Liberation Sans" font-size="20.8" fill="#0A0A0A" text-anchor="middle" font-weight="normal" >10</text><path d="M998.5 472.5 L1009.5 482.0 L998.5 491.5 Z" fill="#E81010"/><path d="M1071.5 472.5 L1060.5 482.0 L1071.5 491.5 Z" fill="#E81010"/><path d="M985.5 459.7 l7 12 h-14z M985.5 502.8 l7 -12 h-14z" fill="#F0A0A8"/><rect x="984.5" y="469.7" width="2" height="23.100000000000023" fill="#F0A0A8"/><text x="1124" y="409.8" font-family="Liberation Sans" font-size="15.5" fill="#0A0A0A" text-anchor="end" font-weight="bold" >AC</text><text x="1124" y="436" font-family="Liberation Sans" font-size="15.5" fill="#0A0A0A" text-anchor="end" font-weight="bold" >DC</text><rect x="1128.6" y="385.5" width="25" height="2" fill="#0A0A0A" /><rect x="1128.6" y="385.5" width="2" height="30" fill="#0A0A0A" /><rect x="1139" y="396.4" width="5.5" height="19" fill="#0A0A0A" /><rect x="1144.5" y="396.4" width="1.2" height="19" fill="#F0F0F0" /><rect x="1128.6" y="416" width="22.4" height="29.8" fill="#3A3A3A" /><rect x="1128.6" y="416" width="20.9" height="28.3" fill="#F4F4F4" /><rect x="1130.1" y="417.5" width="19.4" height="26.8" fill="#B8B8B8" /><rect x="1133.1" y="421.0" width="13.399999999999999" height="1.6" fill="#5A5A5A" /><rect x="1133.1" y="425.4" width="13.399999999999999" height="1.6" fill="#5A5A5A" /><rect x="1133.1" y="429.8" width="13.399999999999999" height="1.6" fill="#5A5A5A" /><rect x="1133.1" y="434.2" width="13.399999999999999" height="1.6" fill="#5A5A5A" /><rect x="1133.1" y="438.6" width="13.399999999999999" height="1.6" fill="#5A5A5A" /><rect x="1129.3" y="505.7" width="1.5" height="32" fill="#0A0A0A" /><rect x="1130.8" y="505.7" width="1" height="32" fill="#F0F0F0" /><rect x="1139" y="505.7" width="4.8" height="22.3" fill="#0A0A0A" /><rect x="1139" y="528" width="6" height="1.5" fill="#F0F0F0" /><rect x="1128.6" y="474.7" width="22.4" height="30.3" fill="#3A3A3A" /><rect x="1128.6" y="474.7" width="20.9" height="28.8" fill="#F4F4F4" /><rect x="1130.1" y="476.2" width="19.4" height="27.3" fill="#B8B8B8" /><rect x="1133.1" y="479.7" width="13.399999999999999" height="1.6" fill="#5A5A5A" /><rect x="1133.1" y="484.09999999999997" width="13.399999999999999" height="1.6" fill="#5A5A5A" /><rect x="1133.1" y="488.5" width="13.399999999999999" height="1.6" fill="#5A5A5A" /><rect x="1133.1" y="492.9" width="13.399999999999999" height="1.6" fill="#5A5A5A" /><rect x="1133.1" y="497.3" width="13.399999999999999" height="1.6" fill="#5A5A5A" /><path d="M1103 503.7 H1113.5 V481.3 H1121.4 M1103 512.2 H1113.5 V533.3 H1121.4" fill="none" stroke="#0A0A0A" stroke-width="2.3" /><text x="1122.5" y="586.3" font-family="Liberation Sans" font-size="15.5" fill="#0A0A0A" text-anchor="end" font-weight="bold" >Auto</text><rect x="1126.7" y="566.2" width="29.899999999999864" height="30.0" fill="#F0F0F0" /><rect x="1128.7" y="568.2" width="27.899999999999864" height="28.0" fill="#111" /><rect x="1128.7" y="568.2" width="24.899999999999864" height="25.0" fill="url(#gBtnP)" /><text x="1122.5" y="616.2" font-family="Liberation Sans" font-size="15.5" fill="#0A0A0A" text-anchor="end" font-weight="bold" >One-Shot</text><rect x="1126.7" y="597.5" width="29.899999999999864" height="30.0" fill="#F0F0F0" /><rect x="1128.7" y="599.5" width="27.899999999999864" height="28.0" fill="#111" /><rect x="1128.7" y="599.5" width="24.899999999999864" height="25.0" fill="url(#gBtn)" /><text x="1122.5" y="649.5" font-family="Liberation Sans" font-size="15.5" fill="#0A0A0A" text-anchor="end" font-weight="bold" >Cursors</text><rect x="1126.7" y="629.4" width="29.899999999999864" height="30.0" fill="#F0F0F0" /><rect x="1128.7" y="631.4" width="27.899999999999864" height="28.0" fill="#111" /><rect x="1128.7" y="631.4" width="24.899999999999864" height="25.0" fill="url(#gBtn)" /><text x="1066.3" y="687.7" font-family="Liberation Sans" font-size="15.5" fill="#0A0A0A" text-anchor="middle" font-weight="bold" >Source</text><text x="1025.3" y="712" font-family="Liberation Sans" font-size="18" fill="#F0F020" text-anchor="middle" font-weight="bold" >A</text><text x="1054.5" y="712" font-family="Liberation Sans" font-size="18" fill="#30A0D0" text-anchor="middle" font-weight="bold" >B</text><text x="1083.6" y="712" font-family="Liberation Sans" font-size="18" fill="#E0308C" text-anchor="middle" font-weight="bold" >C</text><text x="1112.1" y="712" font-family="Liberation Sans" font-size="18" fill="#30B050" text-anchor="middle" font-weight="bold" >D</text><rect x="1003" y="716.2" width="124" height="25" fill="#B0B0B4" /><rect x="1003" y="716.2" width="124" height="1.5" fill="#F0F0F0" /><rect x="1003" y="716.2" width="1.5" height="25" fill="#F0F0F0" /><rect x="1034" y="717.7" width="93" height="2.2" fill="#0A0A0A" /><rect x="1034" y="728" width="83" height="4.2" fill="#0A0A0A" /><rect x="1034" y="732.2" width="84" height="1.2" fill="#F0F0F0" /><rect x="1003.8" y="717" width="30.5" height="23" fill="#3A3A3A" /><rect x="1003.8" y="717" width="29.0" height="21.5" fill="#F4F4F4" /><rect x="1005.3" y="718.5" width="27.5" height="20" fill="#B8B8B8" /><rect x="1008.8" y="721.5" width="1.6" height="14" fill="#4A4A4A" /><rect x="1013.4" y="721.5" width="1.6" height="14" fill="#4A4A4A" /><rect x="1018.0" y="721.5" width="1.6" height="14" fill="#4A4A4A" /><rect x="1022.5999999999999" y="721.5" width="1.6" height="14" fill="#4A4A4A" /><rect x="1027.2" y="721.5" width="1.6" height="14" fill="#4A4A4A" /><text x="1066.2" y="787.8" font-family="Liberation Sans" font-size="24.5" fill="#E8883A" text-anchor="middle" font-weight="bold" >Horizontal</text><text x="1065.3" y="827.8" font-family="Liberation Sans" font-size="15.5" fill="#0A0A0A" text-anchor="middle" font-weight="bold" >Source</text><path d="M998 847 L1018 838 V848" fill="none" stroke="#E8883A" stroke-width="2.2" /><text x="1038.6" y="847.9" font-family="Liberation Sans" font-size="18" fill="#F0F020" text-anchor="middle" font-weight="bold" >A</text><text x="1066.8" y="847.9" font-family="Liberation Sans" font-size="18" fill="#30A0D0" text-anchor="middle" font-weight="bold" >B</text><text x="1096.7" y="847.9" font-family="Liberation Sans" font-size="18" fill="#E0308C" text-anchor="middle" font-weight="bold" >C</text><text x="1125" y="847.9" font-family="Liberation Sans" font-size="18" fill="#30B050" text-anchor="middle" font-weight="bold" >D</text><rect x="989.9" y="855.3" width="153" height="23.6" fill="#B0B0B4" /><rect x="989.9" y="855.3" width="153" height="1.5" fill="#F0F0F0" /><rect x="989.9" y="855.3" width="1.5" height="23.6" fill="#F0F0F0" /><rect x="1019.7" y="856.8" width="123" height="2.2" fill="#0A0A0A" /><rect x="1019.7" y="866.5" width="83" height="4.2" fill="#0A0A0A" /><rect x="1019.7" y="870.7" width="84" height="1.2" fill="#F0F0F0" /><rect x="990.3" y="856" width="29.4" height="22" fill="#3A3A3A" /><rect x="990.3" y="856" width="27.9" height="20.5" fill="#F4F4F4" /><rect x="991.8" y="857.5" width="26.4" height="19" fill="#B8B8B8" /><rect x="995.3" y="860.5" width="1.6" height="13" fill="#4A4A4A" /><rect x="999.9" y="860.5" width="1.6" height="13" fill="#4A4A4A" /><rect x="1004.5" y="860.5" width="1.6" height="13" fill="#4A4A4A" /><rect x="1009.0999999999999" y="860.5" width="1.6" height="13" fill="#4A4A4A" /><rect x="1013.6999999999999" y="860.5" width="1.6" height="13" fill="#4A4A4A" /><text x="1065" y="903.3" font-family="Liberation Sans" font-size="16" fill="#0A0A0A" text-anchor="middle" font-weight="bold" >Position</text><rect x="988.3" y="911.9" width="160.3" height="77.7" fill="#101010" /><rect x="990.5" y="914" width="156" height="73.5" fill="#A2A2A6" /><rect x="991.5" y="922.5" width="154" height="1.5" fill="#F0F0F0" /><rect x="991.5" y="975.5" width="154" height="1.5" fill="#F0F0F0" /><rect x="993" y="924.5" width="150.8" height="50.3" fill="url(#gDrumH)" /><rect x="993" y="924.5" width="150.8" height="50.3" fill="url(#gDrumSideH)" /><rect x="993" y="924.5" width="150.8" height="2" fill="#2A2A2A" /><rect x="993" y="972.8" width="150.8" height="2" fill="#2A2A2A" /><rect x="992.8" y="926.5" width="1" height="4.5" fill="#202020" opacity="0.55"/><rect x="992.8" y="968.3" width="1" height="4.5" fill="#202020" opacity="0.55"/><rect x="1000.8" y="926.5" width="1" height="4.5" fill="#202020" opacity="0.55"/><rect x="1000.8" y="968.3" width="1" height="4.5" fill="#202020" opacity="0.55"/><rect x="1008.8" y="926.5" width="1" height="4.5" fill="#202020" opacity="0.55"/><rect x="1008.8" y="968.3" width="1" height="4.5" fill="#202020" opacity="0.55"/><rect x="1016.8" y="926.5" width="1" height="4.5" fill="#202020" opacity="0.55"/><rect x="1016.8" y="968.3" width="1" height="4.5" fill="#202020" opacity="0.55"/><rect x="1024.8" y="926.5" width="1" height="9" fill="#202020" opacity="0.55"/><rect x="1024.8" y="963.8" width="1" height="9" fill="#202020" opacity="0.55"/><rect x="1032.8" y="926.5" width="1" height="4.5" fill="#202020" opacity="0.55"/><rect x="1032.8" y="968.3" width="1" height="4.5" fill="#202020" opacity="0.55"/><rect x="1040.8" y="926.5" width="1" height="4.5" fill="#202020" opacity="0.55"/><rect x="1040.8" y="968.3" width="1" height="4.5" fill="#202020" opacity="0.55"/><rect x="1048.8" y="926.5" width="1" height="4.5" fill="#202020" opacity="0.55"/><rect x="1048.8" y="968.3" width="1" height="4.5" fill="#202020" opacity="0.55"/><rect x="1056.8" y="926.5" width="1" height="4.5" fill="#202020" opacity="0.55"/><rect x="1056.8" y="968.3" width="1" height="4.5" fill="#202020" opacity="0.55"/><rect x="1064.8" y="926.5" width="1" height="9" fill="#202020" opacity="0.55"/><rect x="1064.8" y="963.8" width="1" height="9" fill="#202020" opacity="0.55"/><rect x="1072.8" y="926.5" width="1" height="4.5" fill="#202020" opacity="0.55"/><rect x="1072.8" y="968.3" width="1" height="4.5" fill="#202020" opacity="0.55"/><rect x="1080.8" y="926.5" width="1" height="4.5" fill="#202020" opacity="0.55"/><rect x="1080.8" y="968.3" width="1" height="4.5" fill="#202020" opacity="0.55"/><rect x="1088.8" y="926.5" width="1" height="4.5" fill="#202020" opacity="0.55"/><rect x="1088.8" y="968.3" width="1" height="4.5" fill="#202020" opacity="0.55"/><rect x="1096.8" y="926.5" width="1" height="4.5" fill="#202020" opacity="0.55"/><rect x="1096.8" y="968.3" width="1" height="4.5" fill="#202020" opacity="0.55"/><rect x="1104.8" y="926.5" width="1" height="9" fill="#202020" opacity="0.55"/><rect x="1104.8" y="963.8" width="1" height="9" fill="#202020" opacity="0.55"/><rect x="1112.8" y="926.5" width="1" height="4.5" fill="#202020" opacity="0.55"/><rect x="1112.8" y="968.3" width="1" height="4.5" fill="#202020" opacity="0.55"/><rect x="1120.8" y="926.5" width="1" height="4.5" fill="#202020" opacity="0.55"/><rect x="1120.8" y="968.3" width="1" height="4.5" fill="#202020" opacity="0.55"/><rect x="1128.8" y="926.5" width="1" height="4.5" fill="#202020" opacity="0.55"/><rect x="1128.8" y="968.3" width="1" height="4.5" fill="#202020" opacity="0.55"/><rect x="1136.8" y="926.5" width="1" height="4.5" fill="#202020" opacity="0.55"/><rect x="1136.8" y="968.3" width="1" height="4.5" fill="#202020" opacity="0.55"/><text x="1065.3" y="957" font-family="Liberation Sans" font-size="21" fill="#101010" text-anchor="middle" font-weight="normal" textLength="114" lengthAdjust="spacing">810 800 790</text><path d="M1056.5 913.5 L1074.5 913.5 L1065.5 923.5 Z" fill="#E81010"/><path d="M1056.5 986.5 L1074.5 986.5 L1065.5 976.5 Z" fill="#E81010"/><path d="M979.7 1170 V1080.2 A88 88 0 0 1 1155.7 1080.2 V1170 H1106.3 V1124.5 H1029.2 V1170 Z" fill="#FFFFFF"/><path d="M979.7 1170 V1080.2 A88 88 0 0 1 1155.7 1080.2 V1170" fill="none" stroke="#606060" stroke-width="0.8"/><path d="M1029.2 1170 V1124.5 M1106.3 1170 V1124.5" stroke="#404040" stroke-width="0.8"/><line x1="1094.9" y1="1036.8" x2="1119.4" y2="999.0" stroke="#A2A2A6" stroke-width="6"/><text x="1010.4" y="1143.5" font-family="Liberation Sans" font-size="14" fill="#2E2E2E" text-anchor="middle" font-weight="normal" >200</text><text x="993" y="1124" font-family="Liberation Sans" font-size="14" fill="#2E2E2E" text-anchor="middle" font-weight="normal" >100</text><text x="988.9" y="1104.6" font-family="Liberation Sans" font-size="14" fill="#2E2E2E" text-anchor="middle" font-weight="normal" >50</text><text x="989.6" y="1081" font-family="Liberation Sans" font-size="14" fill="#2E2E2E" text-anchor="middle" font-weight="normal" >20</text><text x="990.3" y="1060.8" font-family="Liberation Sans" font-size="14" fill="#2E2E2E" text-anchor="middle" font-weight="normal" >10</text><text x="1002.8" y="1040.7" font-family="Liberation Sans" font-size="14" fill="#2E2E2E" text-anchor="middle" font-weight="normal" >5</text><text x="1018" y="1024.7" font-family="Liberation Sans" font-size="14" fill="#2E2E2E" text-anchor="middle" font-weight="normal" >2</text><text x="1038.2" y="1014.3" font-family="Liberation Sans" font-size="14" fill="#2E2E2E" text-anchor="middle" font-weight="normal" >1</text><text x="1057" y="1004.6" font-family="Liberation Sans" font-size="14" fill="#2E2E2E" text-anchor="middle" font-weight="normal" >0.5</text><text x="1079.2" y="1004.6" font-family="Liberation Sans" font-size="14" fill="#2E2E2E" text-anchor="middle" font-weight="normal" >0.2</text><text x="1096.5" y="1015" font-family="Liberation Sans" font-size="14" fill="#2E2E2E" text-anchor="middle" font-weight="normal" >0.1</text><text x="1118.8" y="1027.5" font-family="Liberation Sans" font-size="14" fill="#2E2E2E" text-anchor="middle" font-weight="normal" >50</text><text x="1134" y="1042" font-family="Liberation Sans" font-size="14" fill="#2E2E2E" text-anchor="middle" font-weight="normal" >20</text><text x="1140.3" y="1061.5" font-family="Liberation Sans" font-size="14" fill="#2E2E2E" text-anchor="middle" font-weight="normal" >10</text><text x="1145.8" y="1082.4" font-family="Liberation Sans" font-size="14" fill="#2E2E2E" text-anchor="middle" font-weight="normal" >5</text><text x="1144.4" y="1104.6" font-family="Liberation Sans" font-size="14" fill="#2E2E2E" text-anchor="middle" font-weight="normal" >2</text><text x="1138.9" y="1126" font-family="Liberation Sans" font-size="14" fill="#2E2E2E" text-anchor="middle" font-weight="normal" >1</text><text x="1123.6" y="1142.8" font-family="Liberation Sans" font-size="14" fill="#2E2E2E" text-anchor="middle" font-weight="normal" >0.5</text><path d="M1027.6 1120.6 L1022.0 1126.4 M1016.7 1106.2 L1009.6 1110.0 M1011.6 1093.6 L1003.9 1095.6 M1009.7 1076.7 L1001.7 1076.4 M1012.1 1062.2 L1004.4 1060.0 M1019.3 1046.7 L1012.7 1042.2 M1030.3 1034.3 L1025.2 1028.2 M1045.0 1025.3 L1041.9 1018.0 M1059.9 1021.2 L1058.9 1013.3 M1076.0 1021.3 L1077.2 1013.4 M1090.1 1025.2 L1093.2 1017.8 M1106.7 1035.8 L1112.1 1029.9 M1116.8 1047.8 L1123.6 1043.6 M1123.2 1061.7 L1130.8 1059.4 M1125.7 1077.7 L1133.7 1077.6 M1123.7 1093.9 L1131.4 1096.1 M1117.6 1108.3 L1124.4 1112.4 M1107.6 1120.8 L1113.1 1126.6" stroke="#202020" stroke-width="1"/><circle cx="1067.7" cy="1078.7" r="59.8" fill="url(#gRim)"/><circle cx="1067.7" cy="1078.7" r="57.3" fill="url(#gKnob)"/><circle cx="1067.7" cy="1078.7" r="34" fill="url(#gRing)"/><circle cx="1067.7" cy="1078.7" r="29.5" fill="url(#gInner)"/><path d="M1089.7 1089.7 L1078.2 1102.2 L1088.2 1099.7 Z" fill="#E8883A"/><path d="M1045.6 1030.5 L1060.5 1034.1 L1038.6 1044.1 Z" fill="#E8883A"/><rect x="1033" y="1141.4" width="70" height="26.59999999999991" fill="#D8D8D8" /><rect x="1033" y="1141.4" width="70" height="2.5" fill="#101010" /><rect x="1033" y="1141.4" width="2.5" height="26.59999999999991" fill="#101010" /><rect x="1035.5" y="1143.9" width="65" height="21.59999999999991" fill="#FFFFFF" /><text x="1037" y="1163" font-family="Liberation Sans" font-size="21" fill="#1A1A70" text-anchor="start" font-weight="normal" >1m</text><text x="1002.4" y="1160.5" font-family="Liberation Sans" font-size="19" fill="#101010" text-anchor="middle" font-weight="normal" >mS</text><text x="1131.3" y="1160.5" font-family="Liberation Sans" font-size="19" fill="#101010" text-anchor="middle" font-weight="normal" >мS</text></svg></body></html>
